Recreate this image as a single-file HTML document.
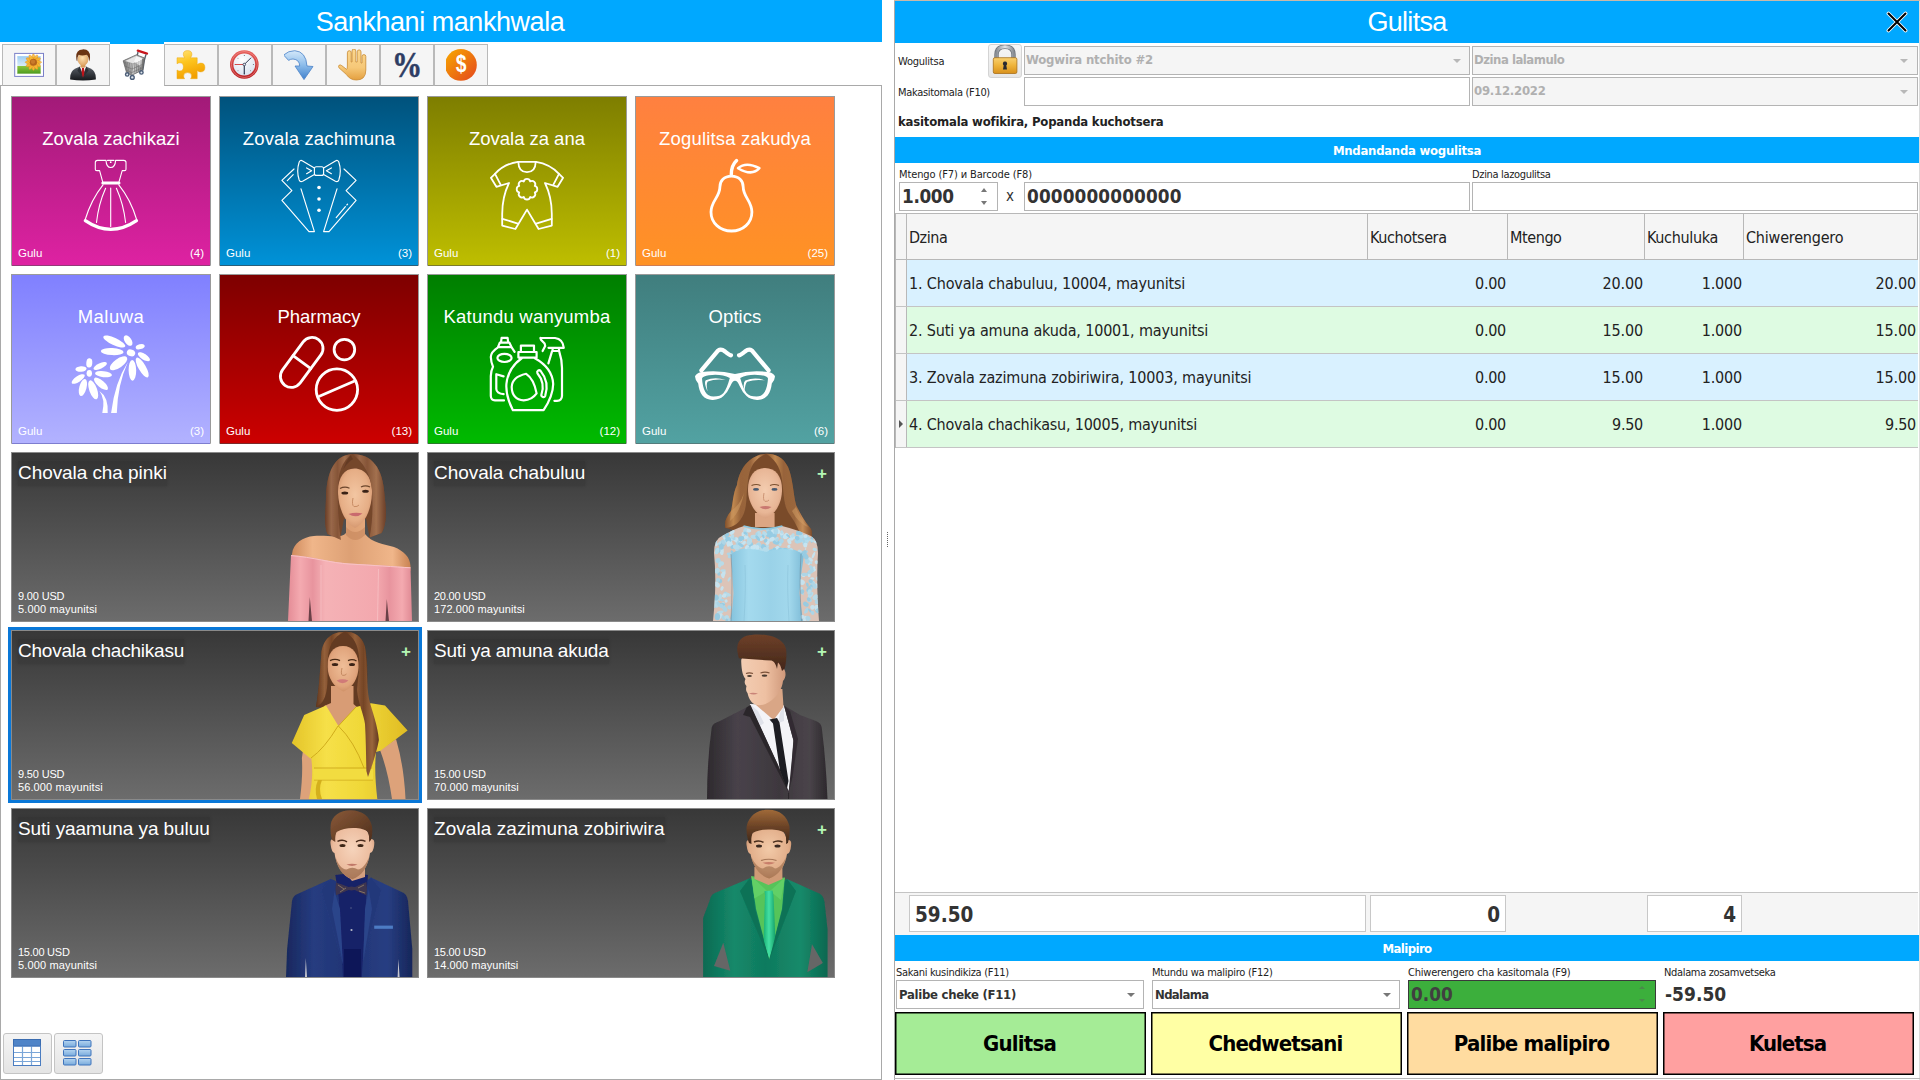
<!DOCTYPE html>
<html lang="ny"><head><meta charset="utf-8"><title>Gulitsa</title>
<style>
*{box-sizing:border-box;margin:0;padding:0}
html,body{width:1920px;height:1080px;overflow:hidden;background:#fff}
body{position:relative;font-family:"Liberation Sans",sans-serif;color:#222}
.tah{font-family:"DejaVu Sans Condensed","DejaVu Sans","Liberation Sans",sans-serif}
#L{position:absolute;left:0;top:0;width:882px;height:1080px;background:#fff}
.hdr{position:absolute;background:#00a8ff;color:#fff;text-align:center;white-space:nowrap}
#lh{left:0;top:0;width:882px;height:42px;font-size:27px;line-height:42px}
#lh>span{position:relative;top:1px;left:-1px}
#pane{position:absolute;left:0;top:85px;width:882px;height:995px;border:1px solid #a9a9a9;background:#fff}
.tab{position:absolute;top:44px;width:54px;height:42px;background:#f5f5f5;border:1px solid #b9b9b9;border-bottom:1px solid #a9a9a9}
.tab.sel{background:#fff;border:none;height:43px;box-shadow:0 -2px 0 #00a8ff}
.tab svg{position:absolute;left:11px;top:4px;width:32px;height:32px}
.tab.sel svg{left:11px;top:4px}
.cat{position:absolute;width:200px;height:170px;border:1px solid #9a9a9a;border-bottom-color:rgba(120,120,120,.35);color:#fff}
.ct{position:absolute;left:0;width:198px;top:31px;text-align:center;font-size:18.5px;line-height:22px;white-space:nowrap}
.ci{position:absolute;left:49px;top:55px;width:100px;height:90px}
.ci svg{position:absolute;left:0;top:0;width:100px;height:90px;overflow:visible}
.cg{position:absolute;left:6px;top:149px;font-size:11.5px;line-height:14px}
.cn{position:absolute;right:6px;top:149px;font-size:11.5px;line-height:14px}
.c1{background:linear-gradient(#a21a78,#de22a2)}
.c2{background:linear-gradient(#00527c,#0092d8)}
.c3{background:linear-gradient(#7e7e00,#bebe00)}
.c4{background:linear-gradient(#ff8040,#ff9224)}
.c5{background:linear-gradient(#8080ff,#b2b2ff)}
.c6{background:linear-gradient(#7e0000,#cc0000)}
.c7{background:linear-gradient(#007e00,#00ba00)}
.c8{background:linear-gradient(#407e7e,#52a2a2)}
.prod{position:absolute;width:408px;height:170px;border:1px solid #8a8a8a;background:linear-gradient(#383838,#6c6c6c);color:#fff;overflow:hidden}
.selbox{position:absolute;width:414px;height:176px;border:3px solid #0a78d8;background:#fff}
.pt{position:absolute;left:6px;top:8px;font-size:19px;line-height:24px;white-space:nowrap}
.pt span.bg{background:rgba(0,0,0,.09);box-shadow:0 0 3px rgba(0,0,0,.14);padding:1px 0 3px}
.pp{position:absolute;left:6px;top:137px;font-size:11px;line-height:13px;white-space:nowrap}
.pq{position:absolute;left:6px;top:150px;font-size:11px;line-height:13px;white-space:nowrap}
.plus{position:absolute;left:802px;left:386px;top:11px;width:16px;text-align:center;font-size:17px;line-height:20px;color:#b4f7b4;font-weight:bold}
.pimg{position:absolute;right:4px;top:0;width:130px;height:168px}
.pimg svg{position:absolute;left:0;top:0;width:130px;height:168px}
.vbtn{position:absolute;top:1033px;width:49px;height:41px;border:1px solid #c4c4c4;border-radius:3px;background:linear-gradient(#f4f4f4,#e4e4e4)}
.vbtn svg{position:absolute;left:8px;top:3px;width:32px;height:32px}
#split{position:absolute;left:887px;top:532px;width:1px;height:15px;background:repeating-linear-gradient(#666 0 1px,transparent 1px 2px)}
/* right */
#R .abs, #R div{position:absolute}
#rh{font-size:27px;line-height:42px}
.lbl{font-size:11px;line-height:13px;white-space:nowrap;color:#222}
.inp{border:1px solid #b4b4b4;background:#fff;height:29px;font-weight:bold;white-space:nowrap;color:#333}
.inp.dis{background:#f5f5f5;color:#b0b0b0}
.bar{background:#00a8ff;color:#fff;text-align:center;font-weight:bold;font-size:13px;width:1024px;left:0}
.arr{width:0;height:0;border-left:4px solid transparent;border-right:4px solid transparent;border-top:4px solid #777}
.arr.lt{border-top-color:#b8b8b8}
#R{position:absolute;left:0;top:0;width:0;height:0}
#R .rb{position:absolute}
.th{background:#f5f5f5;border-right:1px solid #b8b8b8;border-bottom:1px solid #b8b8b8;font-size:16px;color:#222;white-space:nowrap}
.th>span{position:absolute;left:2px;top:14px;line-height:20px}

.tr{border-bottom:1px solid #c4c4c4}
.td{font-size:16px;line-height:20px;padding-top:14px;height:46px;white-space:nowrap;color:#222}
.td.r{text-align:right}
.bbtn{width:251px;height:63px;border:1px solid #000;box-shadow:inset 0 0 0 0.5px #000;text-align:center;font-weight:bold;font-size:22px;line-height:61px;padding-right:2px;color:#000;white-space:nowrap}
.lockb{border:1px solid #d4d4d4;border-radius:3px;background:linear-gradient(#f6f6f6,#e6e6e6)}
.lockb svg{position:absolute;left:2px;top:0px;width:28px;height:30px}

</style></head>
<body>
<div id="L">
<div class="hdr" id="lh"><span><span style="letter-spacing:-0.454px">Sankhani mankhwala</span></span></div>
<div id="pane"></div>
<div class="tab" style="left:2px"><svg viewBox="0 0 32 32"><defs><linearGradient id="psky" x1="0" y1="0" x2="0" y2="1"><stop offset="0" stop-color="#9ccdf2"/><stop offset=".55" stop-color="#d8ecf8"/><stop offset=".56" stop-color="#8cc63f"/><stop offset="1" stop-color="#4c9a1e"/></linearGradient></defs><rect x=".7" y="4.4" width="28.8" height="23" fill="#fff" stroke="#7a80c8" stroke-width="1"/><rect x="3.2" y="7" width="23.6" height="17.8" fill="url(#psky)"/><g transform="translate(19.4 13.2) scale(1.08)"><g fill="#f7b733" stroke="#e08a1c" stroke-width=".4"><ellipse rx="2" ry="7.6"/><ellipse rx="2" ry="7.6" transform="rotate(30)"/><ellipse rx="2" ry="7.6" transform="rotate(60)"/><ellipse rx="2" ry="7.6" transform="rotate(90)"/><ellipse rx="2" ry="7.6" transform="rotate(120)"/><ellipse rx="2" ry="7.6" transform="rotate(150)"/></g><circle r="3.3" fill="#b5651d"/><circle r="2" cx="-.4" cy="-.4" fill="#c97a2a"/></g><rect x="3.2" y="7" width="23.6" height="17.8" fill="none" stroke="#fff" stroke-opacity=".25"/></svg>
</div>
<div class="tab" style="left:56px"><svg viewBox="0 0 32 32"><defs><linearGradient id="usuit" x1="0" y1="0" x2="0" y2="1"><stop offset="0" stop-color="#5a6068"/><stop offset="1" stop-color="#16181c"/></linearGradient><radialGradient id="uface" cx=".45" cy=".4" r=".7"><stop offset="0" stop-color="#ffe0b0"/><stop offset="1" stop-color="#d89a58"/></radialGradient></defs><path d="M2.2 30.6 Q1.6 22.5 7.5 19.6 L12 17.4 H18 L22.5 19.6 Q28.400 22.5 27.800 30.600 Q15 32.400 2.2 30.600Z" fill="url(#usuit)"/><path d="M11.600 17.600 L15 25.500 L18.400 17.600Z" fill="#fff"/><path d="M14 18.800 H16 L16.800 26 L15 28.500 L13.200 26Z" fill="#c0151b"/><path d="M11.800 17.400 L9.400 21.400 L14.800 28.600Z M18.200 17.400 L20.600 21.400 L15.200 28.600Z" fill="#2c3036"/><rect x="12.600" y="13" width="4.800" height="5.600" fill="#d89a58"/><ellipse cx="15" cy="10.200" rx="5.300" ry="6.300" fill="url(#uface)"/><path d="M8.600 11.500 Q6.600 .8 14.500 .4 Q22.500 -.2 22 9 Q21.800 11.500 21 12.500 Q21 7.500 18.500 5.800 Q14 7 10.800 5.800 Q9 8 9.400 12.600Z" fill="#6b3412"/></svg>
</div>
<div class="tab sel" style="left:110px"><svg viewBox="0 0 32 32"><defs><linearGradient id="cgr" x1="0" y1="0" x2="1" y2="0"><stop offset="0" stop-color="#6e6e6e"/><stop offset=".45" stop-color="#d8d8d8"/><stop offset=".6" stop-color="#b8b8b8"/><stop offset="1" stop-color="#767676"/></linearGradient></defs><g transform="translate(0 1)"><path d="M16.800 1.600 L26 4.600" stroke="#c8161d" stroke-width="2.300" stroke-linecap="round"/><path d="M17 3 L15.800 8.500 M25 5.400 L23.400 11 L21.800 21.500" stroke="#5c6470" stroke-width="1.400" fill="none"/><path d="M2.200 11.800 L15.400 5.800 L23.600 9 L21.400 21.200 L10.400 26.400 L5.400 23 Z" fill="url(#cgr)" stroke="#5e5e5e" stroke-width=".7"/><path d="M15.400 6.400 L22.800 9.200 L12 14.800 L3.200 12Z" fill="#e6e6e6" stroke="#7a7a7a" stroke-width=".5"/><path d="M15.300 7.400 L21 9.600 L20 18 L13 12.500Z" fill="#f6f6f6"/><path d="M12 15 L10.600 26" stroke="#777" stroke-width=".7"/><g stroke="#6a6a6a" stroke-width=".55" fill="none"><path d="M4.500 12.800 L6.600 23.400 M6.500 13.400 L8 24.400 M8.500 14 L9.400 25.400 M10.300 14.500 L10 26 M14 14 L13 24.800 M16 13 L15.200 23.800 M18 12 L17.400 22.800 M20 11 L19.400 21.800 M22 10 L21 21 M3.800 17 L11 20 L22.400 15 M4.800 21 L10.700 23.600 L21.800 18.600"/></g><g fill="#dfe6ee" stroke="#4a5c76" stroke-width="1.400"><circle cx="6.200" cy="25.400" r="1.700"/><circle cx="11.300" cy="28.400" r="1.900"/><circle cx="20.400" cy="23.400" r="1.700"/></g></g></svg>
</div>
<div class="tab" style="left:164px"><svg viewBox="0 0 32 32"><defs><linearGradient id="pzg" x1="0" y1="0" x2=".3" y2="1"><stop offset="0" stop-color="#ffe27a"/><stop offset=".45" stop-color="#fdc51f"/><stop offset="1" stop-color="#f3a000"/></linearGradient></defs><path d="M1 8.800 H8.700 Q7.300 7 7.300 5.300 Q7.300 1.600 11.600 1.600 Q15.900 1.600 15.900 5.300 Q15.900 7 14.500 8.800 H21.200 V15.600 Q23 14.100 24.800 14.100 Q28.900 14.100 28.900 18.500 Q28.900 22.900 24.800 22.900 Q23 22.900 21.200 21.400 V29.700 H14.600 Q15.600 28.400 15.600 27 Q15.600 23.600 11.600 23.600 Q7.600 23.600 7.600 27 Q7.600 28.400 8.600 29.700 H1 V21 Q2.400 22 3.800 22 Q7.400 22 7.400 17.800 Q7.400 13.800 3.800 13.800 Q2.400 13.800 1 14.800Z" fill="url(#pzg)" stroke="#eda915" stroke-width=".5"/></svg>
</div>
<div class="tab" style="left:218px"><svg viewBox="0 0 32 32"><defs><radialGradient id="ckf" cx=".4" cy=".3" r=".8"><stop offset="0" stop-color="#ffffff"/><stop offset="1" stop-color="#d5e0ee"/></radialGradient><linearGradient id="ckr" x1="0" y1="0" x2="0" y2="1"><stop offset="0" stop-color="#e8605c"/><stop offset="1" stop-color="#b81e22"/></linearGradient></defs><circle cx="14.300" cy="15.500" r="14.300" fill="url(#ckr)"/><circle cx="14.300" cy="15.500" r="13" fill="none" stroke="#f4a8a4" stroke-width=".8" opacity=".6"/><circle cx="14.300" cy="15.500" r="10.900" fill="url(#ckf)"/><g fill="#555"><circle cx="14.300" cy="6.400" r=".5"/><circle cx="14.300" cy="24.600" r=".5"/><circle cx="5.200" cy="15.500" r=".5"/><circle cx="23.400" cy="15.500" r=".5"/><circle cx="8" cy="9.200" r=".45"/><circle cx="20.600" cy="21.800" r=".45"/><circle cx="8" cy="21.800" r=".45"/></g><path d="M14.300 15.500 L20.800 9" stroke="#333d55" stroke-width="1" stroke-linecap="round"/><path d="M14.300 15.500 V25" stroke="#333d55" stroke-width="1.200" stroke-linecap="round"/><path d="M14.300 15.500 H5.300" stroke="#d03a3a" stroke-width=".9" stroke-linecap="round"/><circle cx="14.300" cy="15.500" r="1.300" fill="#e8eef8" stroke="#333d55" stroke-width=".8"/></svg>
</div>
<div class="tab" style="left:272px"><svg viewBox="0 0 32 32"><defs><linearGradient id="arg" x1="0" y1="0" x2="0" y2="1"><stop offset="0" stop-color="#d4e8fa"/><stop offset=".5" stop-color="#8cbcea"/><stop offset="1" stop-color="#3f80cc"/></linearGradient></defs><path d="M-.400 6 Q4.500 1.600 10.800 1.700 Q22 2.500 23 17 L29 17.500 L20 30.600 L11 17 L15.700 17 Q15.500 10.500 9 10 Q6.500 10 4.600 11.400Z" fill="url(#arg)" stroke="#4a82c8" stroke-width=".8" stroke-linejoin="round"/></svg>
</div>
<div class="tab" style="left:326px"><svg viewBox="0 0 32 32"><defs><linearGradient id="hdg" x1="0" y1="0" x2="0" y2="1"><stop offset="0" stop-color="#fbd891"/><stop offset=".6" stop-color="#f6c878"/><stop offset="1" stop-color="#e4a040"/></linearGradient></defs><path d="M9.400 17 V3.800 Q9.400 1.700 11.300 1.700 Q13.200 1.700 13.200 3.800 V13 H14 V2 Q14 0 15.900 0 Q17.800 0 17.800 2 V13 H19.200 V2.900 Q19.200 .9 21.100 .9 Q23 .9 23 2.900 V14 H24 V7.400 Q24 5.600 25.900 5.600 Q27.800 5.600 27.800 7.400 V21 Q27.800 31 18.500 31 Q12 31 8.400 25.500 L1 18.800 Q-.300 17.300 1 16.300 Q2.300 15.400 3.700 16.600 L8.600 20.400 Q9.400 20 9.400 17Z" fill="url(#hdg)" stroke="#c98a32" stroke-width=".8" stroke-linejoin="round"/></svg>
</div>
<div class="tab" style="left:380px"><svg viewBox="0 0 32 32"><text transform="translate(15 27.900) scale(.84 1)" text-anchor="middle" style="font-family:'Liberation Serif',serif;font-weight:bold;font-size:36px" fill="#2e3d64" stroke="#2e3d64" stroke-width=".5">%</text></svg>
</div>
<div class="tab" style="left:434px"><svg viewBox="0 0 32 32"><defs><linearGradient id="dlg" x1="0" y1="0" x2="1" y2="1"><stop offset="0" stop-color="#f8aa00"/><stop offset="1" stop-color="#e4461e"/></linearGradient></defs><circle cx="14.900" cy="15.900" r="15.900" fill="url(#dlg)"/><text transform="translate(15 23.300) scale(.8 1)" text-anchor="middle" style="font-family:'Liberation Sans',sans-serif;font-weight:bold;font-size:24px" fill="#fff">$</text></svg>
</div>
<div class="cat c1" style="left:11px;top:96px"><div class="ct"><span style="letter-spacing:0.046px">Zovala zachikazi</span></div><div class="ci"><svg viewBox="0 0 100 90" fill="none" stroke="#fff" stroke-width="1.1" stroke-linecap="round" stroke-linejoin="round"><path d="M45 8.4 H36.5 Q34.3 8.4 34.3 10.6 V17.2 Q34.3 18.6 35.8 18.6 H38.6 L41.7 29.8 M54.6 8.4 H62.8 Q65 8.4 65 10.6 V17.2 Q65 18.6 63.5 18.6 H61.2 L58 29.8 M45 8.4 Q45.4 15.5 49.7 15.5 Q54.2 15.5 54.6 8.4 M46.5 8.4 H53"/><path d="M41.8 31.1 H58" stroke-width="3"/><path d="M42 32.8 Q30 48 24.2 67.5 M57.8 32.8 Q70 48 75.6 67.5 M49.7 36 V74.5 M44.6 36.2 Q37.5 52 35.5 70.5 M55.4 36.2 Q62.5 52 64.6 70.5"/><path d="M24.3 68.6 Q49.8 86 75.5 68.6" stroke-width="3.2"/><circle cx="49.7" cy="10.2" r="0.9" fill="#fff" stroke="none"/></svg>
</div><div class="cg">Gulu</div><div class="cn">(4)</div></div>
<div class="cat c2" style="left:219px;top:96px"><div class="ct"><span style="letter-spacing:0.135px">Zovala zachimuna</span></div><div class="ci"><svg viewBox="0 0 100 90" fill="none" stroke="#fff" stroke-width="1.15" stroke-linecap="round" stroke-linejoin="round"><rect x="45.4" y="14.7" width="9.2" height="8.7" rx="2"/><path d="M45.4 16 L33.6 8.9 Q31.2 7.6 30.2 10 Q27.2 19 30.2 28 Q31.2 30.4 33.6 29.2 L45.4 22.4 M54.6 16 L66.4 8.9 Q68.8 7.6 69.8 10 Q72.8 19 69.8 28 Q68.8 30.4 66.4 29.2 L54.6 22.4"/><path d="M37.6 15.9 L42.6 18.8 L37.6 21.7 M62.4 15.9 L57.4 18.8 L62.4 21.7"/><path d="M25 17 L12.9 28.3 L22.9 38.7 L12.9 48.3 L40 79.6 H45.4 L32 36.8 M75 17 L87.1 28.3 L77.1 38.7 L87.1 48.3 L60 79.6 H54.6 L68 36.8"/><path d="M24.2 22.6 L18.3 28.7 M76.4 54.6 L67.2 65.6 M78.6 52.2 L77.8 53"/><g fill="#fff" stroke="none"><circle cx="50" cy="35.5" r="1.8"/><circle cx="50" cy="47" r="1.8"/><circle cx="50" cy="58.3" r="1.8"/></g></svg>
</div><div class="cg">Gulu</div><div class="cn">(3)</div></div>
<div class="cat c3" style="left:427px;top:96px"><div class="ct"><span style="letter-spacing:-0.032px">Zovala za ana</span></div><div class="ci"><svg viewBox="0 0 100 90" fill="none" stroke="#fff" stroke-width="1.8" stroke-linecap="round" stroke-linejoin="round"><path d="M41 9.8 H59 M41.3 10 Q41.6 20.2 50 20.2 Q58.4 20.2 58.7 10"/><path d="M41 9.8 Q27 12 18 21.8 L13.9 25.8 L19.4 34.8 L32 31 Q25.2 45 25.2 62 V73.6 L38.4 77 L50 57.6 L61.6 77 L74.8 73.6 V62 Q74.8 45 68 31 L80.6 34.8 L86.1 25.8 L82 21.8 Q73 12 59 9.8"/><path d="M18 21.8 L23.6 32.6 M82 21.8 L76.4 32.6 M25.4 66.8 L40.8 71.6 M74.6 66.8 L59.2 71.6"/><path d="M46.79 29.44 A3.3 3.3 0 0 1 53.21 29.44 A3.3 3.3 0 0 1 57.76 33.99 A3.3 3.3 0 0 1 57.76 40.41 A3.3 3.3 0 0 1 53.21 44.96 A3.3 3.3 0 0 1 46.79 44.96 A3.3 3.3 0 0 1 42.24 40.41 A3.3 3.3 0 0 1 42.24 33.99 A3.3 3.3 0 0 1 46.79 29.44Z"/></svg></div><div class="cg">Gulu</div><div class="cn">(1)</div></div>
<div class="cat c4" style="left:635px;top:96px"><div class="ct"><span style="letter-spacing:0.157px">Zogulitsa zakudya</span></div><div class="ci"><svg viewBox="0 0 100 90" fill="none" stroke="#fff" stroke-width="2.8" stroke-linecap="round" stroke-linejoin="round"><path d="M46.4 24.2 C39 24.2 34.9 29 34.9 35 C34.9 45 26 49 26 60 C26 71 35 79 46.5 79 C58 79 66.9 71 66.9 60 C66.9 49 58.2 45 58.2 35 C58.2 29 54 24.2 46.4 24.2 Z"/><path d="M51.6 8.6 Q46.3 13.5 46.3 22.6" stroke-width="3.4"/><path d="M53 16.2 Q61 9.2 74.4 16.2 Q67 24.6 53 16.2 Z" stroke-width="2.5"/></svg>
</div><div class="cg">Gulu</div><div class="cn">(25)</div></div>
<div class="cat c5" style="left:11px;top:274px"><div class="ct"><span style="letter-spacing:0.492px">Maluwa</span></div><div class="ci"><svg viewBox="0 0 100 90" fill="#fff" stroke="none"><ellipse cx="53.3" cy="11.5" rx="12" ry="3.7" transform="rotate(25 53.3 11.5)"/><ellipse cx="67.1" cy="10.6" rx="5.9" ry="3.4" transform="rotate(55 67.1 10.6)"/><ellipse cx="79.2" cy="16.7" rx="4.6" ry="2.5" transform="rotate(-15 79.2 16.7)"/><ellipse cx="82.9" cy="26.7" rx="7" ry="2.9" transform="rotate(33 82.9 26.7)"/><ellipse cx="81.2" cy="37.5" rx="11.3" ry="3.7" transform="rotate(60 81.2 37.5)"/><ellipse cx="71.4" cy="40.3" rx="10.4" ry="3.8" transform="rotate(89 71.4 40.3)"/><ellipse cx="57.5" cy="33.3" rx="10.3" ry="4.4" transform="rotate(-35 57.5 33.3)"/><ellipse cx="51.2" cy="21.6" rx="11.4" ry="3.5" transform="rotate(3 51.2 21.6)"/><ellipse cx="70" cy="22.9" rx="4.3" ry="3.4" transform="rotate(20 70 22.9)"/><ellipse cx="28.3" cy="32.9" rx="4.6" ry="3" transform="rotate(95 28.3 32.9)"/><ellipse cx="39.2" cy="36" rx="7.3" ry="2.7" transform="rotate(-25 39.2 36)"/><ellipse cx="42.5" cy="44.2" rx="8.5" ry="3" transform="rotate(7 42.5 44.2)"/><ellipse cx="40" cy="53.8" rx="8.7" ry="3.4" transform="rotate(40 40 53.8)"/><ellipse cx="32.2" cy="59.8" rx="10" ry="3.9" transform="rotate(70 32.2 59.8)"/><ellipse cx="21.9" cy="57.5" rx="8.8" ry="3.6" transform="rotate(-75 21.9 57.5)"/><ellipse cx="17.2" cy="49" rx="7.6" ry="2.9" transform="rotate(-33 17.2 49)"/><ellipse cx="20" cy="39" rx="5.6" ry="2.8" transform="rotate(-5 20 39)"/><ellipse cx="28.3" cy="43.3" rx="3.4" ry="2.7" transform="rotate(90 28.3 43.3)"/><path d="M66.9 32 Q54 52 50.1 83 H55.8 Q56.5 55 66.9 32Z"/><path d="M38.4 61 Q44.5 69 41.3 83 H46.7 Q47.5 67 38.4 61Z"/></svg></div><div class="cg">Gulu</div><div class="cn">(3)</div></div>
<div class="cat c6" style="left:219px;top:274px"><div class="ct"><span style="letter-spacing:-0.035px">Pharmacy</span></div><div class="ci"><svg viewBox="0 0 100 90" fill="none" stroke="#fff" stroke-width="2.8" stroke-linecap="round"><circle cx="75.4" cy="19.6" r="10.3"/><circle cx="67.9" cy="59.6" r="20.7"/><path d="M50.4 66.2 L86.2 50.8"/><g transform="rotate(36.4 32.7 32.4)"><rect x="21.7" y="4" width="22" height="56.8" rx="11"/><path d="M21.7 32 H43.7"/></g></svg>
</div><div class="cg">Gulu</div><div class="cn">(13)</div></div>
<div class="cat c7" style="left:427px;top:274px"><div class="ct"><span style="letter-spacing:0.217px">Katundu wanyumba</span></div><div class="ci"><svg viewBox="0 0 100 90" fill="none" stroke="#fff" stroke-width="2.2" stroke-linecap="round" stroke-linejoin="round"><path d="M43.9 21.6 V15.6 H57 V21.6 M41.4 22 H59.6 V27.6 H41.4 Z M45 28 Q31 38 29.4 54 Q28.6 66 35.9 80.2 H66.6 Q76 66 76.2 54 Q75.5 38 57.5 28"/><path d="M49.2 43.8 Q35 47 34.7 57 Q35 69.5 46.7 70.4 Q55 70 59.6 63.4 Q57 49 49.2 43.8Z"/><path d="M60.4 43.2 Q68.5 53 64.4 64.6 A2 2 0 0 0 68.2 65.8 Q72.6 52 63.6 40.9 A2 2 0 0 0 60.4 43.2 Z"/><path d="M24 12.4 L24.6 7.8 H30.6 L31.2 12.4 M22.8 12.6 H32.4 L34.6 17.2 H21 Z M21 17.4 Q14 22 13.8 27 Q14 32 16 36.7 Q13.8 41 13.8 46 V66 Q14 70.2 18 70.4 H27 M34.8 17.6 L37.6 21.8"/><ellipse cx="27.5" cy="27.9" rx="7.1" ry="4.1"/><path d="M26.6 46.4 L19.3 44.2 V59 Q19.6 63.6 26.6 64.2"/><path d="M63.4 8 H78 Q86 9 86.8 17.8 H71.5 M63.4 8 L64.2 10 L67.6 13.6 L68.2 16 L65.6 21 M75.6 18 V20.8 M82 18 V20.8 M75.2 21 H82 M75 21.4 L71.4 33.4 M82.2 21.4 Q85 30 85 38 V66 Q84.8 70.6 80 70.8 H77.4"/></svg>
</div><div class="cg">Gulu</div><div class="cn">(12)</div></div>
<div class="cat c8" style="left:635px;top:274px"><div class="ct"><span style="letter-spacing:0.060px">Optics</span></div><div class="ci"><svg viewBox="0 0 100 90" fill="#fff" stroke="none"><path fill-rule="evenodd" d="M10 46.6 Q10.5 43.5 16.5 42 Q34 39.8 50 44 Q66 39.8 83.5 42 Q89.5 43.5 90 46.6 Q89.8 50.5 86.8 53.4 Q86 61 82.6 65.6 Q78.5 70.2 72 69.9 Q65.5 69.8 61.5 66 Q57.5 62.5 54.6 56 Q52.5 50.8 50 50.8 Q47.5 50.8 45.4 56 Q42.5 62.5 38.5 66 Q34.500 69.800 28 69.900 Q21.5 70.200 17.4 65.600 Q14 61 13.2 53.4 Q10.2 50.5 10 46.600 Z M17 48.4 Q17.5 56.5 20.2 61.8 Q23 66.600 28.5 66.600 Q35.500 66.600 38.5 63 Q42 58.500 44.800 48 Q36 43.5 24 45.2 Q18 46 17 48.400 Z M83 48.400 Q82.500 56.5 79.800 61.800 Q77 66.600 71.500 66.600 Q64.500 66.600 61.500 63 Q58 58.500 55.200 48 Q64 43.5 76 45.2 Q82 46 83 48.400 Z"/><path d="M22.6 61.5 Q18.6 52.5 20.8 50.2 Q30 46.6 40.8 50 Q30 48.800 22.8 51.4 Q20.8 53.500 22.600 61.500Z M59.400 61.500 Q57.6 52.500 60.4 50.500 Q70 46.800 80.200 50.4 Q70 49 62.200 51.800 Q60.2 53.500 59.400 61.500Z"/><path d="M16.400 40.400 L33.200 20.400 Q36.200 18.400 40 21.500 Q44 25 46 25.300 M83.600 40.400 L66.800 20.400 Q63.800 18.400 60 21.500 Q56 25 54 25.300" fill="none" stroke="#fff" stroke-width="4.200" stroke-linecap="round" stroke-linejoin="round"/></svg>
</div><div class="cg">Gulu</div><div class="cn">(6)</div></div>
<div class="prod" style="left:11px;top:452px"><div class="pimg"><svg viewBox="0 0 130 168"><defs><filter id="sf1" x="-5%" y="-5%" width="110%" height="110%"><feGaussianBlur stdDeviation=".7"/></filter><linearGradient id="p1h" x1="0" y1="0" x2="1" y2="0"><stop offset="0" stop-color="#6a3e26"/><stop offset=".22" stop-color="#99684a"/><stop offset=".45" stop-color="#865538"/><stop offset=".72" stop-color="#a3714f"/><stop offset="1" stop-color="#6c4029"/></linearGradient><linearGradient id="p1d" x1="0" y1="0" x2="1" y2="0"><stop offset="0" stop-color="#e48c96"/><stop offset=".1" stop-color="#f4aab0"/><stop offset=".2" stop-color="#e8949e"/><stop offset=".3" stop-color="#f5b2b6"/><stop offset=".72" stop-color="#f3a8ae"/><stop offset=".82" stop-color="#e8949e"/><stop offset=".92" stop-color="#f4aab0"/><stop offset="1" stop-color="#e08a94"/></linearGradient><radialGradient id="p1s" cx=".5" cy=".45" r=".6"><stop offset="0" stop-color="#f3c6a2"/><stop offset=".7" stop-color="#e6ae86"/><stop offset="1" stop-color="#cf9068"/></radialGradient><linearGradient id="p1sh" x1="0" y1="0" x2="1" y2="0"><stop offset="0" stop-color="#cf8a5c"/><stop offset=".18" stop-color="#f0b68a"/><stop offset=".5" stop-color="#dda074"/><stop offset=".85" stop-color="#f0b68a"/><stop offset="1" stop-color="#c98252"/></linearGradient></defs><g filter="url(#sf1)"><path d="M68 1 C50 2 42.500 20 42 45 C41.500 62 40 74 43.500 81 L56 87 L60 66 L82 66 L85.500 84.500 L97.500 80 C104 70 101.500 52 100.500 42 C99 15 88 1 68 1Z" fill="#74462c"/><path d="M8 101 C9 90 19 84 30 83 C45 82 57 86 62 80 V66 H81 V81 C88 90 100 91 110 94 C120 98 126 104 126.500 113 V118 L7 106Z" fill="url(#p1sh)"/><path d="M62 74 Q71 84 81 74 V82 Q71 92 62 82Z" fill="#c98a60" opacity=".7"/><path d="M54 40 C53.500 25 60 15.500 70.500 15.500 C81 15.500 88.500 25 88 40 C87.500 55 82 70 71 75 C61 70 54.500 55 54 40Z" fill="url(#p1s)"/><path d="M68.500 1 C57 8 54 22 54 36 C53.300 52 54.500 72 57 87 L43.500 81 C40 72 41.600 58 42 45 C42.500 20 50 2 68.500 1Z" fill="url(#p1h)"/><path d="M68 1 C80 9 86.500 22 88 37 C89 56 88.500 70 85.500 84.500 L97.500 80 C104 69 101.500 52 100.500 42 C99 15 88 1 68 1Z" fill="url(#p1h)"/><path d="M66.500 2 Q62 8 59.500 16 Q64 9 69 6Z" fill="#5a341f" opacity=".6"/><g fill="#3a2418"><ellipse cx="60.800" cy="39.900" rx="3.400" ry="1.500"/><ellipse cx="81.500" cy="38.300" rx="3.300" ry="1.500"/></g><path d="M56 35.600 Q60.500 33 65.500 35.200 M77 34 Q81.500 31.600 86 34" stroke="#6b452c" stroke-width="1.200" fill="none"/><path d="M64.500 61 Q71.500 58.600 78.500 60.500 Q72 65.800 64.500 61Z" fill="#c96a6e"/><path d="M69 45 Q67.500 52 70 53.600 Q73.500 54 75 52" stroke="#c88c64" stroke-width="1" fill="none"/><path d="M7 102 C28 103.500 48 109.600 65 110.400 C90 111.800 110 113.200 126.500 114.200 L128 168 H4 Z" fill="url(#p1d)"/><path d="M7 102.600 C28 104 48 110.200 65 111 C90 112.400 110 113.800 126.500 114.800" stroke="#f8c4c6" stroke-width="1" fill="none"/><path d="M24.500 168 L25.800 144 L28 168Z M101.500 168 L102.800 146 L105 168Z" fill="#6a4046"/><path d="M37 112 V168 M94.500 116 L93.500 168" stroke="#f9c8ca" stroke-width=".8" opacity=".8"/></g></svg>
</div><div class="pt"><span class="bg"><span style="letter-spacing:-0.070px">Chovala cha pinki</span></span></div><div class="pp"><span style="letter-spacing:-0.163px">9.00 USD</span></div><div class="pq"><span style="letter-spacing:0.144px">5.000 mayunitsi</span></div></div>
<div class="prod" style="left:427px;top:452px"><div class="pimg"><svg viewBox="0 0 130 168"><defs><filter id="sf2" x="-5%" y="-5%" width="110%" height="110%"><feGaussianBlur stdDeviation=".7"/></filter><linearGradient id="p2h" x1="0" y1="0" x2="1" y2="0"><stop offset="0" stop-color="#84522c"/><stop offset=".2" stop-color="#c08850"/><stop offset=".38" stop-color="#98643a"/><stop offset=".62" stop-color="#9a663c"/><stop offset=".8" stop-color="#c48c58"/><stop offset="1" stop-color="#7e4e2e"/></linearGradient><linearGradient id="p2d" x1="0" y1="0" x2="1" y2="0"><stop offset="0" stop-color="#84c2dc"/><stop offset=".25" stop-color="#a4daee"/><stop offset=".55" stop-color="#9ad2e8"/><stop offset=".8" stop-color="#a2d8ec"/><stop offset="1" stop-color="#7cbad6"/></linearGradient><radialGradient id="p2s" cx=".5" cy=".45" r=".62"><stop offset="0" stop-color="#f4cdb0"/><stop offset=".7" stop-color="#e8b696"/><stop offset="1" stop-color="#cf9472"/></radialGradient><clipPath id="p2cl"><path d="M14 100 Q14 86 22 83 L31 88 Q33 120 31 168 H13 Q17 130 14 100Z"/></clipPath><clipPath id="p2cr"><path d="M101 88 L111 83 Q118 87 118 100 Q116 130 119 168 H101 Q99 120 101 88Z"/></clipPath><clipPath id="p2cy"><path d="M22 83 Q34 76 44 73 Q64 78 82 73 Q98 77 111 83 L104 101 Q84 92 66 99 Q46 92 31 101Z"/></clipPath></defs><g filter="url(#sf2)"><path d="M66 .8 C48 2 39 18 37 32 C33 40 33 50 31 58 C26 64 24 70 25.500 75 L44 80 L86 80 L105 91 C112 88 113 81 111 76 C104 68 100 60 96 52 C93 40 93 26 88 14 C83 4 75 .5 66 .8Z" fill="#7a4c2c"/><path d="M55 60 H74.600 V74 H55Z" fill="#dca684"/><path d="M48 38 C47.500 24 54 15 65 15 C76 15 82.500 24 82 38 C81.500 50 76 61 65.500 65.500 C55 61 48.500 50 48 38Z" fill="url(#p2s)"/><path d="M66 .8 C50 8 49 20 47.500 32 C46 44 47 52 44 60 C40 70 34 74 25.500 75 C24 70 26 64 31 58 C33 50 33 40 37 32 C39 18 48 2 66 .8Z" fill="url(#p2h)"/><path d="M66 .8 C78 8 81 18 82.500 30 C84 44 84 54 90 62 C96 70 100 80 105 91 C112 88 113 81 111 76 C104 68 100 60 96 52 C93 40 93 26 88 14 C83 4 75 .5 66 .8Z" fill="url(#p2h)"/><path d="M31 58 Q40 52 44 40 Q40 60 30 68Z M96 54 Q100 66 108 74 Q98 70 92 58Z" fill="#d09a62" opacity=".55"/><g fill="#4a5a70"><ellipse cx="56" cy="36.400" rx="3" ry="1.400"/><ellipse cx="74.500" cy="36.400" rx="3" ry="1.400"/></g><path d="M51.500 32.600 Q56 30.400 60.500 32.400 M70 32.400 Q74.500 30.400 79 32.600" stroke="#7a5030" stroke-width="1.100" fill="none"/><path d="M59.500 54 Q65.500 51.800 71.500 54 Q65.500 58.400 59.500 54Z" fill="#c97870"/><path d="M64 40 Q62.600 47 65 48.400 Q68 48.600 69 47" stroke="#cc9474" stroke-width="1" fill="none"/><path d="M22 83 Q34 76 44 73 Q64 78 82 73 Q98 77 111 83 Q118 87 118 100 Q116 130 119 168 H13 Q17 130 14 100 Q14 86 22 83Z" fill="#dcc4b8"/><path d="M31 101 Q46 90 66 98 Q84 90 104 101 Q101 120 99.500 140 Q101 155 103 168 H30 Q33 155 33.500 140 Q32 120 31 101Z" fill="url(#p2d)"/><g clip-path="url(#p2cl)" opacity=".9"><ellipse cx="21.8" cy="98.6" rx="3.4" ry="1.9" transform="rotate(91 21.8 98.6)" fill="#c4e6f4"/><ellipse cx="17.8" cy="97.3" rx="2.9" ry="2.4" transform="rotate(17 17.8 97.3)" fill="#92cde6"/><ellipse cx="17.1" cy="98.0" rx="3.4" ry="2.1" transform="rotate(107 17.1 98.0)" fill="#b4deee"/><ellipse cx="29.5" cy="101.0" rx="2.8" ry="1.4" transform="rotate(3 29.5 101.0)" fill="#a8d8ec"/><ellipse cx="15.9" cy="88.9" rx="2.1" ry="1.2" transform="rotate(84 15.9 88.9)" fill="#b4deee"/><ellipse cx="23.9" cy="89.1" rx="2.1" ry="1.6" transform="rotate(1 23.9 89.1)" fill="#a8d8ec"/><ellipse cx="21.9" cy="91.2" rx="3.6" ry="2.7" transform="rotate(151 21.9 91.2)" fill="#92cde6"/><ellipse cx="19.7" cy="90.0" rx="2.2" ry="1.2" transform="rotate(138 19.7 90.0)" fill="#b4deee"/><ellipse cx="16.6" cy="91.6" rx="1.7" ry="1.1" transform="rotate(123 16.6 91.6)" fill="#c4e6f4"/><ellipse cx="18.1" cy="107.7" rx="2.5" ry="2.7" transform="rotate(72 18.1 107.7)" fill="#a8d8ec"/><ellipse cx="23.5" cy="89.2" rx="2.9" ry="1.7" transform="rotate(56 23.5 89.2)" fill="#a8d8ec"/><ellipse cx="29.5" cy="103.7" rx="1.8" ry="1.5" transform="rotate(18 29.5 103.7)" fill="#a8d8ec"/><ellipse cx="22.0" cy="96.7" rx="3.0" ry="1.4" transform="rotate(92 22.0 96.7)" fill="#c4e6f4"/><ellipse cx="21.3" cy="94.0" rx="2.4" ry="2.7" transform="rotate(0 21.3 94.0)" fill="#92cde6"/><ellipse cx="30.0" cy="84.5" rx="2.0" ry="2.7" transform="rotate(108 30.0 84.5)" fill="#a8d8ec"/><ellipse cx="15.6" cy="87.8" rx="2.5" ry="1.1" transform="rotate(110 15.6 87.8)" fill="#92cde6"/><ellipse cx="20.2" cy="128.2" rx="2.0" ry="2.1" transform="rotate(3 20.2 128.2)" fill="#92cde6"/><ellipse cx="19.9" cy="144.5" rx="3.5" ry="1.9" transform="rotate(103 19.9 144.5)" fill="#b4deee"/><ellipse cx="16.9" cy="131.6" rx="3.4" ry="2.4" transform="rotate(45 16.9 131.6)" fill="#c4e6f4"/><ellipse cx="16.5" cy="152.0" rx="2.7" ry="2.2" transform="rotate(70 16.5 152.0)" fill="#b4deee"/><ellipse cx="23.7" cy="143.1" rx="1.8" ry="1.2" transform="rotate(173 23.7 143.1)" fill="#c4e6f4"/><ellipse cx="25.8" cy="141.8" rx="2.4" ry="2.5" transform="rotate(88 25.8 141.8)" fill="#c4e6f4"/><ellipse cx="28.9" cy="167.0" rx="1.9" ry="1.9" transform="rotate(118 28.9 167.0)" fill="#a8d8ec"/><ellipse cx="18.5" cy="164.4" rx="2.0" ry="1.1" transform="rotate(48 18.5 164.4)" fill="#b4deee"/><ellipse cx="18.0" cy="127.0" rx="2.2" ry="2.0" transform="rotate(175 18.0 127.0)" fill="#a8d8ec"/><ellipse cx="19.8" cy="163.3" rx="3.6" ry="2.2" transform="rotate(124 19.8 163.3)" fill="#c4e6f4"/><ellipse cx="23.4" cy="164.7" rx="2.5" ry="1.7" transform="rotate(56 23.4 164.7)" fill="#a8d8ec"/><ellipse cx="14.3" cy="152.4" rx="2.6" ry="2.3" transform="rotate(57 14.3 152.4)" fill="#a8d8ec"/><ellipse cx="15.2" cy="148.5" rx="3.1" ry="2.5" transform="rotate(133 15.2 148.5)" fill="#c4e6f4"/><ellipse cx="26.7" cy="164.3" rx="2.3" ry="2.2" transform="rotate(162 26.7 164.3)" fill="#b4deee"/><ellipse cx="29.1" cy="126.3" rx="2.6" ry="1.1" transform="rotate(119 29.1 126.3)" fill="#b4deee"/><ellipse cx="23.3" cy="151.2" rx="1.8" ry="2.1" transform="rotate(179 23.3 151.2)" fill="#b4deee"/><ellipse cx="25.7" cy="141.7" rx="3.1" ry="2.0" transform="rotate(79 25.7 141.7)" fill="#a8d8ec"/><ellipse cx="22.3" cy="147.1" rx="2.2" ry="1.3" transform="rotate(4 22.3 147.1)" fill="#a8d8ec"/><ellipse cx="22.0" cy="151.4" rx="3.4" ry="1.5" transform="rotate(2 22.0 151.4)" fill="#92cde6"/><ellipse cx="16.3" cy="151.3" rx="2.6" ry="2.3" transform="rotate(62 16.3 151.3)" fill="#b4deee"/><ellipse cx="22.0" cy="135.4" rx="2.4" ry="1.5" transform="rotate(114 22.0 135.4)" fill="#c4e6f4"/><ellipse cx="28.1" cy="141.5" rx="2.8" ry="1.6" transform="rotate(25 28.1 141.5)" fill="#b4deee"/><ellipse cx="19.6" cy="163.5" rx="1.7" ry="1.2" transform="rotate(176 19.6 163.5)" fill="#c4e6f4"/><ellipse cx="15.8" cy="145.3" rx="3.5" ry="2.4" transform="rotate(69 15.8 145.3)" fill="#b4deee"/><ellipse cx="24.8" cy="155.8" rx="3.3" ry="2.1" transform="rotate(58 24.8 155.8)" fill="#a8d8ec"/><ellipse cx="18.4" cy="151.1" rx="3.0" ry="1.6" transform="rotate(64 18.4 151.1)" fill="#a8d8ec"/><ellipse cx="24.3" cy="142.4" rx="2.0" ry="2.3" transform="rotate(48 24.3 142.4)" fill="#c4e6f4"/><ellipse cx="26.7" cy="167.3" rx="1.8" ry="1.3" transform="rotate(96 26.7 167.3)" fill="#92cde6"/><ellipse cx="29.3" cy="154.4" rx="2.0" ry="1.9" transform="rotate(32 29.3 154.4)" fill="#a8d8ec"/><ellipse cx="26.1" cy="148.0" rx="1.7" ry="1.5" transform="rotate(140 26.1 148.0)" fill="#c4e6f4"/><ellipse cx="20.3" cy="159.1" rx="3.4" ry="1.3" transform="rotate(168 20.3 159.1)" fill="#b4deee"/><ellipse cx="16.1" cy="144.5" rx="2.9" ry="2.6" transform="rotate(68 16.1 144.5)" fill="#92cde6"/><ellipse cx="21.4" cy="153.0" rx="2.0" ry="2.3" transform="rotate(147 21.4 153.0)" fill="#a8d8ec"/><ellipse cx="17.4" cy="163.7" rx="3.6" ry="2.7" transform="rotate(97 17.4 163.7)" fill="#92cde6"/><ellipse cx="18.9" cy="120.8" rx="1.6" ry="1.9" transform="rotate(7 18.9 120.8)" fill="#92cde6"/><ellipse cx="23.3" cy="121.5" rx="2.6" ry="1.2" transform="rotate(146 23.3 121.5)" fill="#a8d8ec"/><ellipse cx="21.4" cy="110.5" rx="2.7" ry="2.2" transform="rotate(165 21.4 110.5)" fill="#b4deee"/><ellipse cx="17.2" cy="117.7" rx="3.0" ry="2.4" transform="rotate(124 17.2 117.7)" fill="#b4deee"/><ellipse cx="23.7" cy="120.3" rx="3.1" ry="1.8" transform="rotate(101 23.7 120.3)" fill="#c4e6f4"/><ellipse cx="22.8" cy="122.7" rx="2.7" ry="1.6" transform="rotate(69 22.8 122.7)" fill="#c4e6f4"/><ellipse cx="19.6" cy="112.1" rx="2.7" ry="1.6" transform="rotate(90 19.6 112.1)" fill="#b4deee"/><ellipse cx="23.0" cy="117.5" rx="2.8" ry="1.2" transform="rotate(174 23.0 117.5)" fill="#b4deee"/></g><g clip-path="url(#p2cr)" opacity=".9"><ellipse cx="110.7" cy="109.7" rx="1.8" ry="1.3" transform="rotate(30 110.7 109.7)" fill="#b4deee"/><ellipse cx="108.6" cy="108.9" rx="3.4" ry="1.5" transform="rotate(85 108.6 108.9)" fill="#c4e6f4"/><ellipse cx="107.4" cy="107.4" rx="3.5" ry="2.6" transform="rotate(94 107.4 107.4)" fill="#a8d8ec"/><ellipse cx="105.1" cy="100.1" rx="3.5" ry="1.3" transform="rotate(140 105.1 100.1)" fill="#a8d8ec"/><ellipse cx="102.6" cy="88.0" rx="1.6" ry="1.6" transform="rotate(130 102.6 88.0)" fill="#c4e6f4"/><ellipse cx="111.9" cy="86.7" rx="3.1" ry="1.3" transform="rotate(92 111.9 86.7)" fill="#92cde6"/><ellipse cx="113.5" cy="102.2" rx="3.4" ry="1.2" transform="rotate(114 113.5 102.2)" fill="#c4e6f4"/><ellipse cx="110.6" cy="106.5" rx="2.7" ry="1.5" transform="rotate(39 110.6 106.5)" fill="#c4e6f4"/><ellipse cx="105.7" cy="103.3" rx="3.2" ry="2.5" transform="rotate(57 105.7 103.3)" fill="#92cde6"/><ellipse cx="116.3" cy="89.1" rx="3.2" ry="1.4" transform="rotate(17 116.3 89.1)" fill="#c4e6f4"/><ellipse cx="104.1" cy="86.3" rx="2.4" ry="1.8" transform="rotate(169 104.1 86.3)" fill="#c4e6f4"/><ellipse cx="105.2" cy="100.3" rx="3.2" ry="1.3" transform="rotate(103 105.2 100.3)" fill="#92cde6"/><ellipse cx="116.6" cy="109.2" rx="1.8" ry="1.9" transform="rotate(136 116.6 109.2)" fill="#c4e6f4"/><ellipse cx="114.8" cy="96.5" rx="1.6" ry="2.3" transform="rotate(110 114.8 96.5)" fill="#b4deee"/><ellipse cx="104.3" cy="88.8" rx="2.0" ry="2.4" transform="rotate(178 104.3 88.8)" fill="#a8d8ec"/><ellipse cx="111.3" cy="87.5" rx="3.0" ry="1.2" transform="rotate(17 111.3 87.5)" fill="#b4deee"/><ellipse cx="109.4" cy="147.2" rx="2.5" ry="2.1" transform="rotate(2 109.4 147.2)" fill="#a8d8ec"/><ellipse cx="116.2" cy="132.8" rx="2.5" ry="2.3" transform="rotate(73 116.2 132.8)" fill="#c4e6f4"/><ellipse cx="111.9" cy="129.1" rx="3.2" ry="1.6" transform="rotate(15 111.9 129.1)" fill="#b4deee"/><ellipse cx="111.3" cy="133.2" rx="2.8" ry="1.7" transform="rotate(137 111.3 133.2)" fill="#92cde6"/><ellipse cx="117.4" cy="157.0" rx="3.2" ry="2.4" transform="rotate(73 117.4 157.0)" fill="#92cde6"/><ellipse cx="116.8" cy="154.9" rx="3.1" ry="2.3" transform="rotate(73 116.8 154.9)" fill="#c4e6f4"/><ellipse cx="102.3" cy="139.7" rx="2.5" ry="1.1" transform="rotate(64 102.3 139.7)" fill="#a8d8ec"/><ellipse cx="105.2" cy="165.6" rx="2.9" ry="1.7" transform="rotate(119 105.2 165.6)" fill="#c4e6f4"/><ellipse cx="110.6" cy="141.8" rx="3.6" ry="2.1" transform="rotate(126 110.6 141.8)" fill="#b4deee"/><ellipse cx="118.6" cy="126.0" rx="2.8" ry="2.3" transform="rotate(46 118.6 126.0)" fill="#b4deee"/><ellipse cx="110.1" cy="157.7" rx="2.9" ry="1.1" transform="rotate(47 110.1 157.7)" fill="#92cde6"/><ellipse cx="117.3" cy="148.7" rx="2.6" ry="2.6" transform="rotate(102 117.3 148.7)" fill="#a8d8ec"/><ellipse cx="112.5" cy="159.8" rx="1.8" ry="2.1" transform="rotate(137 112.5 159.8)" fill="#a8d8ec"/><ellipse cx="108.0" cy="165.4" rx="2.4" ry="2.7" transform="rotate(154 108.0 165.4)" fill="#a8d8ec"/><ellipse cx="108.7" cy="146.3" rx="2.2" ry="1.7" transform="rotate(56 108.7 146.3)" fill="#92cde6"/><ellipse cx="109.7" cy="136.6" rx="3.5" ry="2.2" transform="rotate(135 109.7 136.6)" fill="#a8d8ec"/><ellipse cx="101.3" cy="135.5" rx="1.7" ry="1.4" transform="rotate(136 101.3 135.5)" fill="#b4deee"/><ellipse cx="102.0" cy="138.6" rx="2.4" ry="2.0" transform="rotate(130 102.0 138.6)" fill="#92cde6"/><ellipse cx="102.3" cy="163.9" rx="2.5" ry="1.9" transform="rotate(175 102.3 163.9)" fill="#c4e6f4"/><ellipse cx="101.8" cy="129.2" rx="3.2" ry="2.6" transform="rotate(26 101.8 129.2)" fill="#c4e6f4"/><ellipse cx="111.9" cy="129.9" rx="2.8" ry="1.8" transform="rotate(37 111.9 129.9)" fill="#a8d8ec"/><ellipse cx="107.4" cy="131.7" rx="2.3" ry="1.3" transform="rotate(75 107.4 131.7)" fill="#92cde6"/><ellipse cx="112.5" cy="154.3" rx="2.3" ry="2.3" transform="rotate(147 112.5 154.3)" fill="#c4e6f4"/><ellipse cx="118.1" cy="156.6" rx="2.1" ry="1.3" transform="rotate(161 118.1 156.6)" fill="#92cde6"/><ellipse cx="105.9" cy="151.2" rx="3.1" ry="2.2" transform="rotate(34 105.9 151.2)" fill="#92cde6"/><ellipse cx="114.6" cy="133.2" rx="2.1" ry="2.7" transform="rotate(165 114.6 133.2)" fill="#a8d8ec"/><ellipse cx="112.3" cy="125.4" rx="2.1" ry="1.2" transform="rotate(7 112.3 125.4)" fill="#c4e6f4"/><ellipse cx="110.7" cy="128.1" rx="1.8" ry="2.2" transform="rotate(99 110.7 128.1)" fill="#92cde6"/><ellipse cx="109.7" cy="140.2" rx="2.3" ry="1.9" transform="rotate(24 109.7 140.2)" fill="#a8d8ec"/><ellipse cx="115.4" cy="144.2" rx="3.2" ry="2.4" transform="rotate(138 115.4 144.2)" fill="#b4deee"/><ellipse cx="108.6" cy="136.1" rx="3.2" ry="1.7" transform="rotate(118 108.6 136.1)" fill="#92cde6"/><ellipse cx="106.2" cy="157.6" rx="3.3" ry="1.4" transform="rotate(118 106.2 157.6)" fill="#a8d8ec"/><ellipse cx="109.3" cy="138.9" rx="2.7" ry="1.8" transform="rotate(102 109.3 138.9)" fill="#b4deee"/><ellipse cx="106.4" cy="158.3" rx="1.8" ry="1.5" transform="rotate(119 106.4 158.3)" fill="#a8d8ec"/><ellipse cx="113.1" cy="117.4" rx="3.1" ry="1.6" transform="rotate(159 113.1 117.4)" fill="#c4e6f4"/><ellipse cx="107.7" cy="120.9" rx="2.3" ry="1.3" transform="rotate(128 107.7 120.9)" fill="#92cde6"/><ellipse cx="109.0" cy="122.0" rx="2.2" ry="1.6" transform="rotate(72 109.0 122.0)" fill="#c4e6f4"/><ellipse cx="103.3" cy="122.4" rx="1.6" ry="2.2" transform="rotate(105 103.3 122.4)" fill="#c4e6f4"/><ellipse cx="113.8" cy="115.5" rx="2.4" ry="1.4" transform="rotate(106 113.8 115.5)" fill="#c4e6f4"/><ellipse cx="104.8" cy="121.4" rx="3.4" ry="1.6" transform="rotate(4 104.8 121.4)" fill="#a8d8ec"/><ellipse cx="110.7" cy="118.5" rx="3.5" ry="2.1" transform="rotate(145 110.7 118.5)" fill="#a8d8ec"/><ellipse cx="111.3" cy="114.6" rx="2.7" ry="1.6" transform="rotate(49 111.3 114.6)" fill="#a8d8ec"/></g><g clip-path="url(#p2cy)" opacity=".95"><ellipse cx="77.8" cy="78.2" rx="3.1" ry="2.1" transform="rotate(44 77.8 78.2)" fill="#c4e6f4"/><ellipse cx="65.0" cy="100.3" rx="2.3" ry="1.8" transform="rotate(63 65.0 100.3)" fill="#92cde6"/><ellipse cx="81.2" cy="88.3" rx="2.7" ry="2.3" transform="rotate(127 81.2 88.3)" fill="#a8d8ec"/><ellipse cx="58.1" cy="98.0" rx="2.9" ry="2.5" transform="rotate(145 58.1 98.0)" fill="#a8d8ec"/><ellipse cx="100.2" cy="101.8" rx="2.9" ry="1.9" transform="rotate(128 100.2 101.8)" fill="#a8d8ec"/><ellipse cx="59.1" cy="86.2" rx="1.9" ry="2.3" transform="rotate(178 59.1 86.2)" fill="#b4deee"/><ellipse cx="82.2" cy="83.3" rx="2.4" ry="2.0" transform="rotate(49 82.2 83.3)" fill="#a8d8ec"/><ellipse cx="63.5" cy="95.2" rx="2.2" ry="1.4" transform="rotate(166 63.5 95.2)" fill="#a8d8ec"/><ellipse cx="64.3" cy="97.2" rx="2.2" ry="1.4" transform="rotate(65 64.3 97.2)" fill="#c4e6f4"/><ellipse cx="74.8" cy="87.7" rx="2.6" ry="1.8" transform="rotate(161 74.8 87.7)" fill="#b4deee"/><ellipse cx="37.2" cy="96.0" rx="2.2" ry="2.0" transform="rotate(147 37.2 96.0)" fill="#b4deee"/><ellipse cx="97.1" cy="88.1" rx="2.4" ry="2.6" transform="rotate(119 97.1 88.1)" fill="#a8d8ec"/><ellipse cx="64.5" cy="80.4" rx="1.7" ry="2.6" transform="rotate(144 64.5 80.4)" fill="#b4deee"/><ellipse cx="107.9" cy="97.0" rx="3.1" ry="2.4" transform="rotate(10 107.9 97.0)" fill="#c4e6f4"/><ellipse cx="100.5" cy="99.3" rx="3.4" ry="1.8" transform="rotate(44 100.5 99.3)" fill="#b4deee"/><ellipse cx="75.3" cy="78.6" rx="1.9" ry="1.6" transform="rotate(47 75.3 78.6)" fill="#c4e6f4"/><ellipse cx="78.1" cy="102.8" rx="2.1" ry="2.0" transform="rotate(27 78.1 102.8)" fill="#c4e6f4"/><ellipse cx="22.1" cy="97.8" rx="3.3" ry="2.4" transform="rotate(15 22.1 97.8)" fill="#92cde6"/><ellipse cx="76.1" cy="89.3" rx="3.4" ry="2.2" transform="rotate(15 76.1 89.3)" fill="#92cde6"/><ellipse cx="39.0" cy="93.8" rx="3.2" ry="1.8" transform="rotate(7 39.0 93.8)" fill="#b4deee"/><ellipse cx="68.3" cy="78.6" rx="3.3" ry="1.6" transform="rotate(56 68.3 78.6)" fill="#a8d8ec"/><ellipse cx="71.0" cy="102.9" rx="2.9" ry="1.2" transform="rotate(13 71.0 102.9)" fill="#c4e6f4"/><ellipse cx="31.3" cy="85.4" rx="2.5" ry="2.6" transform="rotate(149 31.3 85.4)" fill="#b4deee"/><ellipse cx="23.1" cy="84.9" rx="3.0" ry="1.5" transform="rotate(102 23.1 84.9)" fill="#b4deee"/><ellipse cx="89.9" cy="98.8" rx="3.3" ry="2.3" transform="rotate(162 89.9 98.8)" fill="#c4e6f4"/><ellipse cx="47.6" cy="84.9" rx="2.7" ry="1.6" transform="rotate(61 47.6 84.9)" fill="#b4deee"/><ellipse cx="70.9" cy="76.5" rx="2.0" ry="1.7" transform="rotate(20 70.9 76.5)" fill="#92cde6"/><ellipse cx="105.2" cy="90.3" rx="3.0" ry="1.6" transform="rotate(149 105.2 90.3)" fill="#a8d8ec"/><ellipse cx="31.0" cy="92.0" rx="1.9" ry="2.1" transform="rotate(32 31.0 92.0)" fill="#c4e6f4"/><ellipse cx="57.4" cy="98.3" rx="2.8" ry="1.3" transform="rotate(41 57.4 98.3)" fill="#c4e6f4"/><ellipse cx="108.9" cy="86.6" rx="3.1" ry="1.7" transform="rotate(148 108.9 86.6)" fill="#c4e6f4"/><ellipse cx="79.0" cy="96.2" rx="3.2" ry="1.7" transform="rotate(60 79.0 96.2)" fill="#b4deee"/><ellipse cx="76.8" cy="95.1" rx="2.8" ry="1.6" transform="rotate(142 76.8 95.1)" fill="#c4e6f4"/><ellipse cx="80.1" cy="91.6" rx="1.6" ry="1.6" transform="rotate(62 80.1 91.6)" fill="#b4deee"/><ellipse cx="31.4" cy="85.0" rx="2.6" ry="2.4" transform="rotate(149 31.4 85.0)" fill="#c4e6f4"/><ellipse cx="44.3" cy="89.6" rx="2.2" ry="1.5" transform="rotate(110 44.3 89.6)" fill="#c4e6f4"/><ellipse cx="72.5" cy="79.7" rx="3.5" ry="2.7" transform="rotate(127 72.5 79.7)" fill="#c4e6f4"/><ellipse cx="80.0" cy="96.5" rx="1.9" ry="1.9" transform="rotate(75 80.0 96.5)" fill="#92cde6"/><ellipse cx="51.0" cy="100.9" rx="2.3" ry="1.9" transform="rotate(22 51.0 100.9)" fill="#c4e6f4"/><ellipse cx="43.0" cy="90.5" rx="2.7" ry="1.2" transform="rotate(165 43.0 90.5)" fill="#c4e6f4"/><ellipse cx="102.0" cy="102.8" rx="3.2" ry="2.1" transform="rotate(22 102.0 102.8)" fill="#a8d8ec"/><ellipse cx="47.4" cy="100.0" rx="2.1" ry="2.0" transform="rotate(150 47.4 100.0)" fill="#c4e6f4"/><ellipse cx="74.6" cy="97.5" rx="2.5" ry="1.8" transform="rotate(141 74.6 97.5)" fill="#c4e6f4"/><ellipse cx="49.1" cy="93.5" rx="3.1" ry="1.7" transform="rotate(107 49.1 93.5)" fill="#a8d8ec"/><ellipse cx="36.0" cy="85.9" rx="1.7" ry="2.0" transform="rotate(21 36.0 85.9)" fill="#b4deee"/><ellipse cx="37.3" cy="89.1" rx="2.1" ry="2.0" transform="rotate(60 37.3 89.1)" fill="#a8d8ec"/><ellipse cx="85.5" cy="96.8" rx="2.4" ry="1.9" transform="rotate(18 85.5 96.8)" fill="#92cde6"/><ellipse cx="58.2" cy="92.1" rx="3.0" ry="2.3" transform="rotate(135 58.2 92.1)" fill="#b4deee"/><ellipse cx="100.2" cy="87.4" rx="3.4" ry="2.2" transform="rotate(149 100.2 87.4)" fill="#a8d8ec"/><ellipse cx="71.8" cy="100.3" rx="2.7" ry="1.9" transform="rotate(78 71.8 100.3)" fill="#a8d8ec"/><ellipse cx="85.9" cy="100.1" rx="3.1" ry="2.1" transform="rotate(135 85.9 100.1)" fill="#92cde6"/><ellipse cx="99.7" cy="99.4" rx="2.1" ry="2.5" transform="rotate(44 99.7 99.4)" fill="#b4deee"/><ellipse cx="107.6" cy="87.8" rx="1.8" ry="2.6" transform="rotate(98 107.6 87.8)" fill="#b4deee"/><ellipse cx="104.7" cy="99.5" rx="3.6" ry="2.3" transform="rotate(157 104.7 99.5)" fill="#92cde6"/><ellipse cx="98.3" cy="86.2" rx="3.2" ry="1.5" transform="rotate(134 98.3 86.2)" fill="#a8d8ec"/><ellipse cx="69.3" cy="101.6" rx="1.6" ry="1.5" transform="rotate(54 69.3 101.6)" fill="#92cde6"/><ellipse cx="37.1" cy="86.8" rx="2.5" ry="2.0" transform="rotate(25 37.1 86.8)" fill="#c4e6f4"/><ellipse cx="101.1" cy="82.9" rx="2.6" ry="2.6" transform="rotate(176 101.1 82.9)" fill="#b4deee"/><ellipse cx="99.3" cy="79.9" rx="3.3" ry="2.2" transform="rotate(11 99.3 79.9)" fill="#92cde6"/><ellipse cx="95.7" cy="84.3" rx="2.5" ry="1.4" transform="rotate(158 95.7 84.3)" fill="#c4e6f4"/><ellipse cx="68.9" cy="80.9" rx="3.5" ry="2.7" transform="rotate(117 68.9 80.9)" fill="#92cde6"/><ellipse cx="85.9" cy="83.1" rx="3.4" ry="2.5" transform="rotate(128 85.9 83.1)" fill="#c4e6f4"/><ellipse cx="51.5" cy="101.8" rx="3.2" ry="1.8" transform="rotate(30 51.5 101.8)" fill="#92cde6"/><ellipse cx="32.6" cy="94.0" rx="2.1" ry="2.3" transform="rotate(90 32.6 94.0)" fill="#92cde6"/><ellipse cx="91.6" cy="84.8" rx="2.9" ry="2.5" transform="rotate(106 91.6 84.8)" fill="#c4e6f4"/><ellipse cx="108.0" cy="100.0" rx="2.0" ry="1.5" transform="rotate(24 108.0 100.0)" fill="#a8d8ec"/><ellipse cx="62.7" cy="76.2" rx="3.4" ry="1.2" transform="rotate(163 62.7 76.2)" fill="#a8d8ec"/><ellipse cx="74.8" cy="82.3" rx="2.1" ry="2.4" transform="rotate(16 74.8 82.3)" fill="#92cde6"/><ellipse cx="37.8" cy="95.3" rx="1.7" ry="2.4" transform="rotate(27 37.8 95.3)" fill="#a8d8ec"/><ellipse cx="76.7" cy="100.6" rx="2.8" ry="1.1" transform="rotate(160 76.7 100.6)" fill="#a8d8ec"/><ellipse cx="37.8" cy="90.1" rx="2.9" ry="1.7" transform="rotate(118 37.8 90.1)" fill="#a8d8ec"/><ellipse cx="67.5" cy="88.7" rx="3.3" ry="2.2" transform="rotate(94 67.5 88.7)" fill="#c4e6f4"/><ellipse cx="74.3" cy="96.4" rx="1.8" ry="1.8" transform="rotate(120 74.3 96.4)" fill="#92cde6"/><ellipse cx="91.2" cy="96.9" rx="2.1" ry="1.9" transform="rotate(40 91.2 96.9)" fill="#b4deee"/><ellipse cx="45.0" cy="79.9" rx="3.5" ry="1.2" transform="rotate(81 45.0 79.9)" fill="#c4e6f4"/><ellipse cx="50.6" cy="91.6" rx="2.8" ry="2.4" transform="rotate(91 50.6 91.6)" fill="#92cde6"/><ellipse cx="32.1" cy="79.2" rx="2.9" ry="2.0" transform="rotate(130 32.1 79.2)" fill="#c4e6f4"/><ellipse cx="26.8" cy="86.3" rx="3.0" ry="2.4" transform="rotate(133 26.8 86.3)" fill="#92cde6"/><ellipse cx="89.3" cy="88.5" rx="2.9" ry="1.9" transform="rotate(68 89.3 88.5)" fill="#c4e6f4"/><ellipse cx="36.1" cy="94.0" rx="3.3" ry="2.4" transform="rotate(11 36.1 94.0)" fill="#b4deee"/><ellipse cx="63.1" cy="94.3" rx="3.0" ry="2.6" transform="rotate(23 63.1 94.3)" fill="#c4e6f4"/><ellipse cx="34.7" cy="87.2" rx="3.1" ry="1.2" transform="rotate(43 34.7 87.2)" fill="#c4e6f4"/><ellipse cx="30.0" cy="90.1" rx="2.5" ry="2.6" transform="rotate(175 30.0 90.1)" fill="#c4e6f4"/><ellipse cx="48.0" cy="77.4" rx="3.3" ry="1.8" transform="rotate(15 48.0 77.4)" fill="#c4e6f4"/><ellipse cx="54.0" cy="83.8" rx="3.6" ry="2.1" transform="rotate(7 54.0 83.8)" fill="#b4deee"/><ellipse cx="73.5" cy="102.8" rx="3.1" ry="2.0" transform="rotate(164 73.5 102.8)" fill="#c4e6f4"/><ellipse cx="62.7" cy="85.4" rx="3.3" ry="1.7" transform="rotate(141 62.7 85.4)" fill="#c4e6f4"/><ellipse cx="58.8" cy="81.1" rx="3.2" ry="2.4" transform="rotate(86 58.8 81.1)" fill="#b4deee"/><ellipse cx="40.9" cy="87.6" rx="2.2" ry="1.8" transform="rotate(179 40.9 87.6)" fill="#c4e6f4"/><ellipse cx="97.9" cy="79.9" rx="2.4" ry="1.2" transform="rotate(124 97.9 79.9)" fill="#92cde6"/><ellipse cx="105.5" cy="92.0" rx="2.6" ry="2.3" transform="rotate(92 105.5 92.0)" fill="#c4e6f4"/><ellipse cx="45.6" cy="84.5" rx="1.9" ry="2.6" transform="rotate(65 45.6 84.5)" fill="#c4e6f4"/><ellipse cx="85.7" cy="100.3" rx="1.6" ry="1.6" transform="rotate(69 85.7 100.3)" fill="#a8d8ec"/><ellipse cx="97.2" cy="85.1" rx="2.1" ry="2.5" transform="rotate(120 97.2 85.1)" fill="#92cde6"/><ellipse cx="56.7" cy="80.9" rx="1.7" ry="1.4" transform="rotate(107 56.7 80.9)" fill="#a8d8ec"/><ellipse cx="40.4" cy="85.9" rx="2.6" ry="2.2" transform="rotate(93 40.4 85.9)" fill="#92cde6"/><ellipse cx="49.6" cy="87.1" rx="2.4" ry="2.5" transform="rotate(150 49.6 87.1)" fill="#b4deee"/><ellipse cx="57.7" cy="85.2" rx="3.3" ry="1.5" transform="rotate(53 57.7 85.2)" fill="#92cde6"/><ellipse cx="75.8" cy="78.1" rx="3.3" ry="2.3" transform="rotate(87 75.8 78.1)" fill="#a8d8ec"/><ellipse cx="93.2" cy="102.3" rx="2.2" ry="2.2" transform="rotate(165 93.2 102.3)" fill="#c4e6f4"/><ellipse cx="71.1" cy="84.2" rx="1.8" ry="2.3" transform="rotate(67 71.1 84.2)" fill="#92cde6"/><ellipse cx="29.9" cy="86.4" rx="2.4" ry="1.2" transform="rotate(69 29.9 86.4)" fill="#92cde6"/><ellipse cx="47.0" cy="94.4" rx="2.0" ry="2.6" transform="rotate(36 47.0 94.4)" fill="#c4e6f4"/><ellipse cx="52.9" cy="94.7" rx="2.6" ry="2.3" transform="rotate(163 52.9 94.7)" fill="#c4e6f4"/><ellipse cx="64.1" cy="81.5" rx="3.3" ry="1.6" transform="rotate(165 64.1 81.5)" fill="#b4deee"/><ellipse cx="32.6" cy="100.4" rx="3.4" ry="1.5" transform="rotate(68 32.6 100.4)" fill="#92cde6"/><ellipse cx="63.3" cy="83.4" rx="2.1" ry="1.2" transform="rotate(62 63.3 83.4)" fill="#92cde6"/><ellipse cx="71.8" cy="81.6" rx="2.9" ry="1.4" transform="rotate(84 71.8 81.6)" fill="#92cde6"/><ellipse cx="106.0" cy="84.5" rx="2.8" ry="2.6" transform="rotate(139 106.0 84.5)" fill="#a8d8ec"/><ellipse cx="76.6" cy="85.9" rx="2.4" ry="1.6" transform="rotate(149 76.6 85.9)" fill="#b4deee"/><ellipse cx="55.6" cy="100.4" rx="1.7" ry="1.3" transform="rotate(91 55.6 100.4)" fill="#92cde6"/><ellipse cx="65.6" cy="87.7" rx="1.6" ry="2.1" transform="rotate(49 65.6 87.7)" fill="#92cde6"/><ellipse cx="81.9" cy="80.8" rx="1.6" ry="2.0" transform="rotate(71 81.9 80.8)" fill="#c4e6f4"/><ellipse cx="70.1" cy="98.6" rx="3.1" ry="1.2" transform="rotate(148 70.1 98.6)" fill="#92cde6"/><ellipse cx="45.2" cy="77.0" rx="1.6" ry="2.4" transform="rotate(37 45.2 77.0)" fill="#b4deee"/><ellipse cx="82.4" cy="102.0" rx="3.2" ry="1.4" transform="rotate(112 82.4 102.0)" fill="#b4deee"/><ellipse cx="92.8" cy="82.5" rx="2.4" ry="1.7" transform="rotate(120 92.8 82.5)" fill="#b4deee"/><ellipse cx="42.9" cy="81.2" rx="2.2" ry="1.4" transform="rotate(92 42.9 81.2)" fill="#c4e6f4"/><ellipse cx="99.2" cy="102.7" rx="3.2" ry="2.5" transform="rotate(56 99.2 102.7)" fill="#b4deee"/><ellipse cx="67.1" cy="93.7" rx="1.7" ry="2.1" transform="rotate(74 67.1 93.7)" fill="#b4deee"/><ellipse cx="26.7" cy="81.4" rx="2.6" ry="2.4" transform="rotate(71 26.7 81.4)" fill="#92cde6"/><ellipse cx="54.4" cy="93.8" rx="2.0" ry="2.5" transform="rotate(37 54.4 93.8)" fill="#c4e6f4"/><ellipse cx="71.9" cy="86.2" rx="3.0" ry="2.1" transform="rotate(150 71.9 86.2)" fill="#c4e6f4"/><ellipse cx="33.0" cy="84.9" rx="2.9" ry="1.5" transform="rotate(33 33.0 84.9)" fill="#a8d8ec"/><ellipse cx="63.5" cy="94.1" rx="3.2" ry="2.6" transform="rotate(48 63.5 94.1)" fill="#92cde6"/><ellipse cx="58.9" cy="92.3" rx="2.4" ry="2.6" transform="rotate(178 58.9 92.3)" fill="#a8d8ec"/><ellipse cx="35.8" cy="102.9" rx="3.3" ry="1.4" transform="rotate(64 35.8 102.9)" fill="#a8d8ec"/><ellipse cx="57.6" cy="100.2" rx="3.3" ry="2.5" transform="rotate(31 57.6 100.2)" fill="#a8d8ec"/><ellipse cx="49.2" cy="97.2" rx="3.3" ry="1.6" transform="rotate(71 49.2 97.2)" fill="#b4deee"/><ellipse cx="89.4" cy="102.4" rx="2.4" ry="2.2" transform="rotate(98 89.4 102.4)" fill="#c4e6f4"/><ellipse cx="60.9" cy="98.2" rx="2.7" ry="2.5" transform="rotate(158 60.9 98.2)" fill="#b4deee"/><ellipse cx="32.6" cy="83.4" rx="1.6" ry="2.0" transform="rotate(26 32.6 83.4)" fill="#b4deee"/><ellipse cx="46.1" cy="80.6" rx="2.6" ry="1.7" transform="rotate(47 46.1 80.6)" fill="#a8d8ec"/><ellipse cx="88.9" cy="93.4" rx="1.6" ry="1.7" transform="rotate(25 88.9 93.4)" fill="#c4e6f4"/><ellipse cx="109.3" cy="85.8" rx="1.7" ry="1.7" transform="rotate(101 109.3 85.8)" fill="#a8d8ec"/><ellipse cx="40.9" cy="91.9" rx="3.3" ry="1.5" transform="rotate(34 40.9 91.9)" fill="#92cde6"/><ellipse cx="98.1" cy="102.8" rx="2.5" ry="2.4" transform="rotate(130 98.1 102.8)" fill="#c4e6f4"/><ellipse cx="97.4" cy="101.4" rx="2.7" ry="2.2" transform="rotate(49 97.4 101.4)" fill="#a8d8ec"/><ellipse cx="88.3" cy="83.0" rx="2.6" ry="1.1" transform="rotate(38 88.3 83.0)" fill="#92cde6"/><ellipse cx="23.0" cy="89.3" rx="3.2" ry="2.4" transform="rotate(132 23.0 89.3)" fill="#b4deee"/><ellipse cx="49.1" cy="89.4" rx="2.9" ry="2.4" transform="rotate(138 49.1 89.4)" fill="#b4deee"/><ellipse cx="57.4" cy="94.5" rx="2.1" ry="2.6" transform="rotate(4 57.4 94.5)" fill="#c4e6f4"/><ellipse cx="42.0" cy="85.3" rx="2.3" ry="2.2" transform="rotate(146 42.0 85.3)" fill="#92cde6"/><ellipse cx="77.2" cy="87.0" rx="2.2" ry="1.2" transform="rotate(118 77.2 87.0)" fill="#a8d8ec"/><ellipse cx="45.3" cy="80.2" rx="2.0" ry="1.2" transform="rotate(24 45.3 80.2)" fill="#92cde6"/><ellipse cx="81.9" cy="79.1" rx="1.8" ry="1.3" transform="rotate(63 81.9 79.1)" fill="#b4deee"/><ellipse cx="23.9" cy="85.6" rx="1.7" ry="1.3" transform="rotate(171 23.9 85.6)" fill="#c4e6f4"/><ellipse cx="27.9" cy="91.1" rx="2.8" ry="1.6" transform="rotate(85 27.9 91.1)" fill="#c4e6f4"/><ellipse cx="65.9" cy="96.6" rx="3.4" ry="2.4" transform="rotate(13 65.9 96.6)" fill="#b4deee"/><ellipse cx="105.4" cy="83.3" rx="2.0" ry="1.7" transform="rotate(178 105.4 83.3)" fill="#c4e6f4"/></g><path d="M43.500 73 Q63 79 82.400 73" stroke="#8cc8e0" stroke-width="1.600" fill="none"/><path d="M31 101 Q33 130 31 168 M101 101 Q99 130 101.500 168" stroke="#6a7a84" stroke-width=".8" fill="none" opacity=".6"/><path d="M45 112 Q46 135 44 168 M88 112 Q87 135 89 168" stroke="#88c0d8" stroke-width=".7" fill="none" opacity=".8"/></g></svg></div><div class="pt"><span class="bg"><span style="letter-spacing:-0.045px">Chovala chabuluu</span></span></div><div class="plus">+</div><div class="pp"><span style="letter-spacing:-0.257px">20.00 USD</span></div><div class="pq"><span style="letter-spacing:0.089px">172.000 mayunitsi</span></div></div>
<div class="selbox" style="left:8px;top:627px"></div>
<div class="prod" style="left:11px;top:630px"><div class="pimg"><svg viewBox="0 0 130 168"><defs><filter id="sf3" x="-5%" y="-5%" width="110%" height="110%"><feGaussianBlur stdDeviation=".7"/></filter><linearGradient id="p3h" x1="0" y1="0" x2="1" y2="0"><stop offset="0" stop-color="#5e351c"/><stop offset=".3" stop-color="#94603a"/><stop offset=".55" stop-color="#754526"/><stop offset=".8" stop-color="#9a663c"/><stop offset="1" stop-color="#623820"/></linearGradient><linearGradient id="p3d" x1="0" y1="0" x2="1" y2="0"><stop offset="0" stop-color="#e4c428"/><stop offset=".3" stop-color="#f6e048"/><stop offset=".6" stop-color="#f0d838"/><stop offset="1" stop-color="#e0bc24"/></linearGradient><radialGradient id="p3s" cx=".5" cy=".45" r=".62"><stop offset="0" stop-color="#efbe98"/><stop offset=".7" stop-color="#e0a47c"/><stop offset="1" stop-color="#c4855c"/></radialGradient></defs><g filter="url(#sf3)"><path d="M60.700 .8 C46 1 38.500 10 37.300 23 C36 40 35 60 31.900 76 L48 78 L82 78 C84 50 84 30 81 16 C78 5 70 .6 60.700 .8Z" fill="#643a20"/><path d="M17.900 127 Q20 110 24 100 L30 128 Q28 150 28.800 168 H16 Q19 145 17.900 127Z M96 119 L112 108 Q120 135 121.500 168 H108 Q104 140 96 119Z" fill="#dda27a"/><path d="M47 55 H69.500 V73 L74 77 L54.400 98 L40 75 L47 72Z" fill="#d89c74"/><path d="M43.500 36 C43 23 49 15 59 15 C69 15 75 23 74.600 36 C74.200 47 69 56.500 59.500 60.600 C50 56.500 44 47 43.500 36Z" fill="url(#p3s)"/><path d="M42 74.600 L54.400 95 L72 76 L87 72.300 L101 74.600 L123.600 99.500 L96.400 119.800 L92 121 Q90 140 93.300 168 H24.900 Q30 145 27.200 127 L26.400 127.500 L7.800 112 L20.200 84Z" fill="url(#p3d)"/><path d="M54.400 95 L72 76 M54.400 95 Q70 110 80 137 M27 127 Q40 118 54 95 M30 137 H88 M30 149 H89" stroke="#d0ac1c" stroke-width="1" fill="none"/><path d="M29 138 H89 V148.500 H29.500Z" fill="#f2dc40"/><path d="M34 149 Q30 158 33 168 H38 Q34 158 38 149Z" fill="#d4b01e"/><path d="M60.700 .8 C48 6 45 16 43.800 28 C43 40 44.500 50 42.500 60 C41 68 38 73 31.900 76 C35 60 36 40 37.300 23 C38.500 10 46 1 60.700 .8Z" fill="url(#p3h)"/><path d="M60.700 .8 C70 6 74 14 75 26 C76 38 73.500 50 73 59 C74 72 80 84 81 93 C82 110 82 125 82.400 140 L84 146 C88 135 93 120 94.900 109 C94 95 88 80 85 68 C82.500 55 83.500 35 81 16 C78 5 70 .6 60.700 .8Z" fill="url(#p3h)"/><g fill="#3a2416"><ellipse cx="51" cy="33.400" rx="3.200" ry="1.500"/><ellipse cx="68" cy="33.600" rx="3" ry="1.500"/></g><path d="M46 29.600 Q51 27 56 29.600 M64 29.600 Q68.500 27.600 72.500 30" stroke="#4a2c18" stroke-width="1.300" fill="none"/><path d="M52.500 49.600 Q58.500 46.800 64.500 49.600 Q58.500 54.800 52.500 49.600Z" fill="#d07a78"/><path d="M58 37 Q56.500 43 58.500 44.400 Q61.500 44.600 62.500 43" stroke="#c48a62" stroke-width="1" fill="none"/></g></svg>
</div><div class="pt"><span class="bg"><span style="letter-spacing:-0.225px">Chovala chachikasu</span></span></div><div class="plus">+</div><div class="pp"><span style="letter-spacing:-0.163px">9.50 USD</span></div><div class="pq"><span style="letter-spacing:0.108px">56.000 mayunitsi</span></div></div>
<div class="prod" style="left:427px;top:630px"><div class="pimg"><svg viewBox="0 0 130 168"><defs><filter id="sf4" x="-5%" y="-5%" width="110%" height="110%"><feGaussianBlur stdDeviation=".7"/></filter><linearGradient id="p4j" x1="0" y1="0" x2="1" y2="0"><stop offset="0" stop-color="#2e2a2e"/><stop offset=".25" stop-color="#48424a"/><stop offset=".6" stop-color="#3e383e"/><stop offset=".85" stop-color="#4a444a"/><stop offset="1" stop-color="#2c282c"/></linearGradient><linearGradient id="p4s" x1="0" y1="0" x2="1" y2="0"><stop offset="0" stop-color="#f3cdb3"/><stop offset=".55" stop-color="#eec0a2"/><stop offset="1" stop-color="#cf987a"/></linearGradient><linearGradient id="p4h" x1="0" y1="0" x2="0" y2="1"><stop offset="0" stop-color="#6e4028"/><stop offset="1" stop-color="#42261a"/></linearGradient></defs><g filter="url(#sf4)"><path d="M11.700 96.400 Q13 92 20 90 L46.700 76.200 L60 84 L84 74.600 L100 84 L116 90 Q121.300 92 121.800 97 Q126 130 127.500 168 H7 Q7 130 11.700 96.400Z" fill="url(#p4j)"/><path d="M49.800 73 L84 74.600 L93.300 108.900 L91 146.200 L88.600 160 L78 134 Z" fill="#f4f4f8"/><path d="M60 58 H82.400 L83.500 76 L73.500 89 L56 74Z" fill="#d9a686"/><path d="M49.800 73 L58 80 L64 92 L60 95Z M84 74.600 L80 82 L78 92 L84 90Z" fill="#e0e2ea"/><path d="M41.200 30 C41 24 50 22 60 23 C72 24 80 28 82 36 C86 38 87 46 83 50 C82 58 78 64 72 69 C66 74 60 75 55 73.600 C50 71 48.500 66 47.500 62 C45.500 60 46 57 46.500 55 C44 52 44.500 50 45.500 48 C42 44 41.400 36 41.200 30Z" fill="url(#p4s)"/><path d="M37.300 16 C38 8 45 4 51.300 3.900 C58 3.300 64 3.600 70 4.700 C80 7 86 13 86.300 20.200 C86.600 27 86 33 84.800 37.300 L82 40 C81 36 80 33 78 31.500 L77 38 C76 33 74 30.500 71.500 29.500 C60 29 48 27.800 38.900 27.200 C37.600 23 37 19 37.300 16Z" fill="url(#p4h)"/><path d="M46 42.500 Q49.500 41.200 53 42.600 M60.500 42 Q65 40.200 69.500 42" stroke="#7a5038" stroke-width="1.100" fill="none"/><g fill="#4a3a30"><ellipse cx="49.500" cy="45" rx="2.400" ry="1.100"/><ellipse cx="64.500" cy="44.600" rx="2.800" ry="1.200"/></g><path d="M49 62.200 Q53 61 58 62.400 Q53.500 64.800 49 62.200Z" fill="#c98478"/><path d="M69.500 88.500 L77 87 L79.500 91.500 L88.500 150 L86.800 158 L80 140 L73 92.500Z" fill="#1e1e22"/><path d="M46.700 76.200 L43 84 L50 86 L88.600 161.700 L78 134 L50.500 74Z" fill="#2c282c"/><path d="M84 74.600 L90 80 L98 108 L92.500 146 L88.600 161.700 L93.600 110 Z" fill="#302c30"/><path d="M88.600 161.700 V168" stroke="#2a2428" stroke-width="1"/></g></svg></div><div class="pt"><span class="bg"><span style="letter-spacing:-0.206px">Suti ya amuna akuda</span></span></div><div class="plus">+</div><div class="pp"><span style="letter-spacing:-0.246px">15.00 USD</span></div><div class="pq"><span style="letter-spacing:0.108px">70.000 mayunitsi</span></div></div>
<div class="prod" style="left:11px;top:808px"><div class="pimg"><svg viewBox="0 0 130 168"><defs><filter id="sf5" x="-5%" y="-5%" width="110%" height="110%"><feGaussianBlur stdDeviation=".7"/></filter><linearGradient id="p5j" x1="0" y1="0" x2="1" y2="0"><stop offset="0" stop-color="#18285e"/><stop offset=".22" stop-color="#263c80"/><stop offset=".5" stop-color="#203474"/><stop offset=".8" stop-color="#283e82"/><stop offset="1" stop-color="#16265a"/></linearGradient><radialGradient id="p5s" cx=".5" cy=".42" r=".62"><stop offset="0" stop-color="#f6d4bc"/><stop offset=".7" stop-color="#ecbc9e"/><stop offset="1" stop-color="#c99070"/></radialGradient><linearGradient id="p5h" x1="0" y1="0" x2="1" y2="1"><stop offset="0" stop-color="#8a5a38"/><stop offset="1" stop-color="#4e2e1c"/></linearGradient></defs><g filter="url(#sf5)"><path d="M12.400 85.500 L46.700 70 L68 82 L87 68.400 L119.800 84 Q123 86 124 92 L128.300 140 V168 H2 L3.100 140 L8 92 Q9 87 12.400 85.500Z" fill="url(#p5j)"/><path d="M51.300 66 L68 64 L84 66 L82 90 L77.800 168 H59 L55 90Z" fill="#172068"/><path d="M60 140 H77 V168 H60Z" fill="#101858"/><path d="M46.700 70 L52 64 L37.300 80.900 L59 155.500 L56 100Z M87 68.400 L83 64 L97.200 80.900 L79.300 152.400 L81 100Z" fill="#2c448a"/><path d="M46.700 70 L37.300 80.900 L59 155.500 L48 100 L52 72Z" fill="#24387a"/><path d="M87 68.400 L97.200 80.900 L79.300 152.400 L88 100 L83.500 72Z" fill="#24387a"/><rect x="90.200" y="116.600" width="18.700" height="3.200" fill="#4d7cc4"/><path d="M21 168 L21.800 149 L23 168Z M113.600 168 L114.400 150 L115.600 168Z" fill="#c8c8d0"/><circle cx="67.500" cy="121" r="1.100" fill="#b8bcc8"/><circle cx="67" cy="99" r=".8" fill="#5a648c"/><path d="M55 56 H81 V68 L68 72Z" fill="#d4a080"/><path d="M46.700 36 Q45.500 30 49 30 L50.500 31 C50 22 56 17 68 17 C80 17 86 22 85.500 31 L87.500 30 Q91 30 90.200 36 Q89.500 43 86 44 C84.500 56 78 68 68.400 70.200 C58 68 52 56 50.500 44 Q47.500 43 46.700 36Z" fill="url(#p5s)"/><path d="M51.500 48 C53 58 58 67 68.400 70.200 C78 67 83.500 58 85 48 C82 56 78 60 74 60.500 Q68.400 57 62.500 60.500 C58 60 54 56 51.500 48Z" fill="#9c6c4c" opacity=".75"/><path d="M66.900 1.200 C56 1 48 7 46.700 15.500 C46.200 22 47 28 48.200 31 L51.300 33 C51 28 51.500 25 52.500 23 C58 20 64 18.500 72 19 C78 19.500 82 21 84 23 C85 26 85.500 29 85 33 L87 31 C88.500 26 88.600 21 87.900 17 C86 7 78 1.500 66.900 1.200Z" fill="url(#p5h)"/><g fill="#3c2618"><ellipse cx="58.500" cy="36.600" rx="3" ry="1.500"/><ellipse cx="76.500" cy="36.600" rx="3" ry="1.500"/></g><path d="M53.500 32.400 Q58.500 30 63 32.800 M72 32.800 Q76.500 30 81.500 32.400" stroke="#4a2c1a" stroke-width="1.500" fill="none"/><path d="M62.500 55.600 Q68 54 73.500 55.600 Q68 58.400 62.500 55.600Z" fill="#c07868"/><path d="M52 73.500 Q58 75 64.500 78 L67.700 77.500 L71 78 Q77 75 82.400 73 Q83.500 80 82.400 86.300 Q76 84 71 81 L67.700 81.500 L64.500 81 Q58 84 52 86.300 Q51 80 52 73.500Z" fill="#3c3650"/><path d="M54 76 L60 80 M56 83 L62 79 M74 79 L80 76 M75 82 L81 84" stroke="#a08868" stroke-width=".9" opacity=".8"/></g></svg>
</div><div class="pt"><span class="bg"><span style="letter-spacing:-0.076px">Suti yaamuna ya buluu</span></span></div><div class="pp"><span style="letter-spacing:-0.246px">15.00 USD</span></div><div class="pq"><span style="letter-spacing:0.144px">5.000 mayunitsi</span></div></div>
<div class="prod" style="left:427px;top:808px"><div class="pimg"><svg viewBox="0 0 130 168"><defs><filter id="sf6" x="-5%" y="-5%" width="110%" height="110%"><feGaussianBlur stdDeviation=".7"/></filter><linearGradient id="p6j" x1="0" y1="0" x2="1" y2="0"><stop offset="0" stop-color="#0a6a52"/><stop offset=".25" stop-color="#15896a"/><stop offset=".5" stop-color="#0f7a5e"/><stop offset=".78" stop-color="#168a6a"/><stop offset="1" stop-color="#0a6850"/></linearGradient><radialGradient id="p6s" cx=".5" cy=".42" r=".62"><stop offset="0" stop-color="#f2caa8"/><stop offset=".7" stop-color="#e2ae8a"/><stop offset="1" stop-color="#bc8460"/></radialGradient><linearGradient id="p6h" x1="0" y1="0" x2="0" y2="1"><stop offset="0" stop-color="#a06a38"/><stop offset=".5" stop-color="#6a4226"/><stop offset="1" stop-color="#3c2618"/></linearGradient><linearGradient id="p6t" x1="0" y1="0" x2="1" y2="0"><stop offset="0" stop-color="#18b074"/><stop offset=".45" stop-color="#44e0a4"/><stop offset="1" stop-color="#14a068"/></linearGradient></defs><g filter="url(#sf6)"><path d="M14.800 84 L49.800 69.200 L69 80 L87 70 L119.800 84.800 Q123.500 87 124.500 93 L127.500 120 V168 H3.100 V108.900 L9.500 92 Q10.500 86 14.800 84Z" fill="url(#p6j)"/><path d="M23.300 133.700 L14 157 L30.300 161.700Z M112 135.300 L122.900 154 L107.300 163.300Z" fill="#666"/><path d="M51.300 66.900 L68 70 L84.800 68.400 L82 100 L69.200 150.500 L56 100Z" fill="#56c45a"/><path d="M51.300 66.900 L54.400 89.400 L67 82Z M84.800 68.400 L80.900 91 L70 82Z" fill="#62d066"/><path d="M64.500 82 L72.500 81.500 L73.500 86.500 L75.500 132 L69.200 149.500 L63.500 132 L65 86.500Z" fill="url(#p6t)"/><path d="M49.800 69.200 L40 82 L69.200 151 L55 100 L51.500 72Z M87 70 L96 82 L69.200 151 L82.500 100 L85 72Z" fill="#0d7257"/><path d="M54.400 58 H82.400 V70 L68.500 76 L54.400 70Z" fill="#cf9a76"/><path d="M46.700 37 Q45.500 31 49 31 L50.500 32 C50 24 56 18 68.400 18 C81 18 87 24 86.300 32 L88.500 31 Q92 31 91 37 Q90.500 44 87 45 C85.500 56 79 67 69.200 69.400 C59 67 52.500 56 50.500 45 Q47.500 44 46.700 37Z" fill="url(#p6s)"/><path d="M51.500 48 C53 57 59 66.500 69.200 69.400 C79 66.500 84.500 57 86 48 C83 55 79 59 75 59.500 Q69.200 55 63 59.500 C59 59 54.500 55 51.500 48Z" fill="#9a6a4a" opacity=".6"/><path d="M68.400 .8 C57 .5 49 7 46.700 17 C46 24 47.500 30 49 34 L51.500 35 C51 30 51.500 27 52.500 24 C58 21 64 20 72 20.500 C78 21 83 22 85 24 C86 27 86.500 31 86 35 L87.900 34 C89.500 28 90 22 89.400 17 C87 7 80 1 68.400 .8Z" fill="url(#p6h)"/><g fill="#3a2a20"><ellipse cx="59" cy="37" rx="3" ry="1.500"/><ellipse cx="77.500" cy="37" rx="3" ry="1.500"/></g><path d="M54 33 Q59 30.600 63.500 33.400 M73 33.400 Q77.500 30.600 82.500 33" stroke="#4a2e1c" stroke-width="1.500" fill="none"/><path d="M62.500 53.800 Q68.800 52 75 53.800 Q68.800 57.400 62.500 53.800Z" fill="#c87e6a"/><path d="M61 51.500 Q68.800 49 76.500 51.500" stroke="#8a5a3c" stroke-width="1.200" fill="none" opacity=".7"/></g></svg>
</div><div class="pt"><span class="bg"><span style="letter-spacing:0.056px">Zovala zazimuna zobiriwira</span></span></div><div class="plus">+</div><div class="pp"><span style="letter-spacing:-0.246px">15.00 USD</span></div><div class="pq"><span style="letter-spacing:0.077px">14.000 mayunitsi</span></div></div>
<div class="vbtn" style="left:3px"><svg viewBox="0 0 32 32"><rect x="1.500" y="2.500" width="27" height="26" rx="1" fill="#fff" stroke="#4a7cc0" stroke-width="1"/><rect x="1.500" y="2.500" width="27" height="6.500" fill="#4f84c8" stroke="#3a6cb0" stroke-width="1"/><g stroke="#7aa6d8" stroke-width="1.200" fill="none"><path d="M2 15.500 H28 M2 20.500 H28 M2 24.500 H28 M10.500 9 V28 M19.500 9 V28"/></g><rect x="1.500" y="9" width="27" height="19.500" fill="none" stroke="#4a7cc0" stroke-width="1"/></svg>
</div>
<div class="vbtn" style="left:54px"><div style="position:absolute;left:-1px;top:0;width:49px;height:41px"><svg viewBox="0 0 32 32"><defs><linearGradient id="cdg" x1="0" y1="0" x2="0" y2="1"><stop offset="0" stop-color="#b4d4f0"/><stop offset="1" stop-color="#78aadc"/></linearGradient></defs><g fill="url(#cdg)" stroke="#3f74bc" stroke-width="1"><rect x="1.500" y="3.500" width="12.500" height="6.500" rx="1"/><rect x="16.500" y="3.500" width="12.500" height="6.500" rx="1"/><rect x="1.500" y="12.500" width="12.500" height="6.500" rx="1"/><rect x="16.500" y="12.500" width="12.500" height="6.500" rx="1"/><rect x="1.500" y="21.500" width="12.500" height="6.500" rx="1"/><rect x="16.500" y="21.500" width="12.500" height="6.500" rx="1"/></g></svg>
</div></div>
</div>
<div id="split"></div>
<div id="R">
<div class="rb" style="left:894px;top:0;width:1px;height:1080px;background:#a9a9a9"></div>
<div class="rb" style="left:1919px;top:0;width:1px;height:1080px;background:#dcdcdc"></div>
<div class="rb" style="left:894px;top:1078px;width:1026px;height:1px;background:#b8b8b8"></div>
<div class="rb" style="left:894px;top:0;width:1026px;height:1px;background:#c9b9a9"></div>
<div class="hdr" id="rh" style="left:895px;top:1px;width:1024px;height:42px"><span><span style="letter-spacing:-0.692px">Gulitsa</span></span></div>
<svg class="abs" style="position:absolute;left:1886px;top:11px;width:22px;height:22px" viewBox="0 0 22 22"><path d="M2.500 2.500 L19.500 19.500 M19.500 2.500 L2.500 19.500" stroke="#fff" stroke-width="3.800" stroke-linecap="round"/><path d="M2.500 2.500 L19.500 19.500 M19.500 2.500 L2.500 19.500" stroke="#000" stroke-width="2" stroke-linecap="round"/></svg>
<div class="lbl tah" style="left:898px;top:55px"><span style="letter-spacing:-0.234px">Wogulitsa</span></div>
<div class="lockb" style="left:988px;top:44px;width:34px;height:34px"><svg viewBox="0 0 28 30"><defs><linearGradient id="lkb" x1="0" y1="0" x2="0" y2="1"><stop offset="0" stop-color="#f8d070"/><stop offset=".5" stop-color="#eeb33a"/><stop offset="1" stop-color="#d8901c"/></linearGradient><linearGradient id="lks" x1="0" y1="0" x2="1" y2="0"><stop offset="0" stop-color="#8a8f96"/><stop offset=".5" stop-color="#e2e5e8"/><stop offset="1" stop-color="#8a8f96"/></linearGradient></defs><path d="M5.500 14 V9.500 Q5.500 1.700 14 1.700 Q22.500 1.700 22.500 9.500 V14" fill="none" stroke="#6e747c" stroke-width="4.400"/><path d="M5.500 14 V9.500 Q5.500 1.700 14 1.700 Q22.500 1.700 22.500 9.500 V14" fill="none" stroke="url(#lks)" stroke-width="3"/><rect x="2.300" y="12.700" width="23.600" height="15.800" rx="1.600" fill="url(#lkb)" stroke="#a8701a" stroke-width=".8"/><path d="M14 16.600 A2.100 2.100 0 0 1 15.300 20.400 L16 24.600 H12 L12.700 20.400 A2.100 2.100 0 0 1 14 16.600Z" fill="#2a2a30"/></svg>
</div>
<div class="inp dis tah" style="left:1024px;top:46px;width:446px;height:29px;font-size:13px;line-height:25px;padding-left:1px"><span style="letter-spacing:-0.179px">Wogwira ntchito #2</span></div>
<div class="arr lt" style="left:1453px;top:59px"></div>
<div class="inp dis tah" style="left:1472px;top:46px;width:446px;height:29px;font-size:13px;line-height:25px;padding-left:1px"><span style="letter-spacing:-0.484px">Dzina lalamulo</span></div>
<div class="arr lt" style="left:1900px;top:59px"></div>
<div class="lbl tah" style="left:898px;top:86px"><span style="letter-spacing:-0.323px">Makasitomala (F10)</span></div>
<div class="inp tah" style="left:1024px;top:77px;width:446px;height:29px"></div>
<div class="inp dis tah" style="left:1472px;top:77px;width:446px;height:29px;font-size:13px;line-height:25px;padding-left:1px"><span style="letter-spacing:-0.240px">09.12.2022</span></div>
<div class="arr lt" style="left:1900px;top:90px"></div>
<div class="tah" style="left:898px;top:114px;font-size:13px;line-height:16px;font-weight:bold;white-space:nowrap;color:#222"><span style="letter-spacing:-0.202px">kasitomala wofikira, Popanda kuchotsera</span></div>
<div class="bar tah" style="left:895px;top:137px;height:26px;line-height:27px"><span style="letter-spacing:-0.264px">Mndandanda wogulitsa</span></div>
<div class="lbl tah" style="left:899px;top:168px"><span style="letter-spacing:-0.123px">Mtengo (F7) и Barcode (F8)</span></div>
<div class="inp tah" style="left:899px;top:182px;width:99px;height:29px;font-size:18.800px;line-height:27px;padding-left:2px"><span style="letter-spacing:-0.371px">1.000</span></div>
<div class="arr" style="left:981px;top:188px;transform:rotate(180deg);border-left-width:3.500px;border-right-width:3.500px"></div>
<div class="arr" style="left:981px;top:201px;border-left-width:3.500px;border-right-width:3.500px"></div>
<div class="tah" style="left:1004px;top:186px;font-size:15px;line-height:20px;color:#333;width:12px;text-align:center">x</div>
<div class="inp tah" style="left:1024px;top:182px;width:446px;height:29px;font-size:18.800px;line-height:27px;padding-left:2px"><span style="letter-spacing:0.135px">0000000000000</span></div>
<div class="lbl tah" style="left:1472px;top:168px"><span style="letter-spacing:-0.333px">Dzina lazogulitsa</span></div>
<div class="inp tah" style="left:1472px;top:182px;width:446px;height:29px"></div>
<div id="tbl" class="tah">
<div style="left:895px;top:213px;width:1023px;height:235px;border:1px solid #b8b8b8;border-right:none;background:#f5f5f5"></div>
<div class="th" style="left:907px;top:214px;width:461px;height:46px"><span><span style="letter-spacing:-0.469px">Dzina</span></span></div>
<div class="th" style="left:1368px;top:214px;width:140px;height:46px"><span><span style="letter-spacing:-0.374px">Kuchotsera</span></span></div>
<div class="th" style="left:1508px;top:214px;width:137px;height:46px"><span><span style="letter-spacing:-0.417px">Mtengo</span></span></div>
<div class="th" style="left:1645px;top:214px;width:99px;height:46px"><span><span style="letter-spacing:-0.326px">Kuchuluka</span></span></div>
<div class="th" style="left:1744px;top:214px;width:174px;height:46px"><span><span style="letter-spacing:-0.203px">Chiwerengero</span></span></div>
<div style="left:906px;top:214px;width:1px;height:234px;background:#b8b8b8"></div>
<div style="left:896px;top:259px;width:11px;height:1px;background:#b8b8b8"></div>
<div class="tr" style="left:907px;top:260px;width:1011px;height:47px;background:#d9f1ff"></div>
<div style="left:896px;top:306px;width:11px;height:1px;background:#c4c4c4"></div>
<div class="td" style="left:909px;top:260px"><span style="letter-spacing:-0.162px">1. Chovala chabuluu, 10004, mayunitsi</span></div>
<div class="td r" style="left:1368px;width:138px;top:260px"><span style="letter-spacing:-0.262px">0.00</span></div>
<div class="td r" style="left:1508px;width:135px;top:260px"><span style="letter-spacing:-0.141px">20.00</span></div>
<div class="td r" style="left:1645px;width:97px;top:260px"><span style="letter-spacing:-0.201px">1.000</span></div>
<div class="td r" style="left:1744px;width:172px;top:260px"><span style="letter-spacing:-0.141px">20.00</span></div>
<div class="tr" style="left:907px;top:307px;width:1011px;height:47px;background:#defbe2"></div>
<div style="left:896px;top:353px;width:11px;height:1px;background:#c4c4c4"></div>
<div class="td" style="left:909px;top:307px"><span style="letter-spacing:-0.163px">2. Suti ya amuna akuda, 10001, mayunitsi</span></div>
<div class="td r" style="left:1368px;width:138px;top:307px"><span style="letter-spacing:-0.262px">0.00</span></div>
<div class="td r" style="left:1508px;width:135px;top:307px"><span style="letter-spacing:-0.141px">15.00</span></div>
<div class="td r" style="left:1645px;width:97px;top:307px"><span style="letter-spacing:-0.201px">1.000</span></div>
<div class="td r" style="left:1744px;width:172px;top:307px"><span style="letter-spacing:-0.141px">15.00</span></div>
<div class="tr" style="left:907px;top:354px;width:1011px;height:47px;background:#d9f1ff"></div>
<div style="left:896px;top:400px;width:11px;height:1px;background:#c4c4c4"></div>
<div class="td" style="left:909px;top:354px"><span style="letter-spacing:-0.164px">3. Zovala zazimuna zobiriwira, 10003, mayunitsi</span></div>
<div class="td r" style="left:1368px;width:138px;top:354px"><span style="letter-spacing:-0.262px">0.00</span></div>
<div class="td r" style="left:1508px;width:135px;top:354px"><span style="letter-spacing:-0.141px">15.00</span></div>
<div class="td r" style="left:1645px;width:97px;top:354px"><span style="letter-spacing:-0.201px">1.000</span></div>
<div class="td r" style="left:1744px;width:172px;top:354px"><span style="letter-spacing:-0.141px">15.00</span></div>
<div class="tr" style="left:907px;top:401px;width:1011px;height:47px;background:#defbe2"></div>
<div style="left:896px;top:447px;width:11px;height:1px;background:#c4c4c4"></div>
<div class="td" style="left:909px;top:401px"><span style="letter-spacing:-0.211px">4. Chovala chachikasu, 10005, mayunitsi</span></div>
<div class="td r" style="left:1368px;width:138px;top:401px"><span style="letter-spacing:-0.262px">0.00</span></div>
<div class="td r" style="left:1508px;width:135px;top:401px"><span style="letter-spacing:-0.262px">9.50</span></div>
<div class="td r" style="left:1645px;width:97px;top:401px"><span style="letter-spacing:-0.201px">1.000</span></div>
<div class="td r" style="left:1744px;width:172px;top:401px"><span style="letter-spacing:-0.262px">9.50</span></div>
<div style="left:899px;top:420px;width:0;height:0;border-top:4px solid transparent;border-bottom:4px solid transparent;border-left:4px solid #555"></div>
</div>
<div style="left:895px;top:892px;width:1023px;height:43px;background:#f5f5f5;border-top:1px solid #c4c4c4"></div>
<div class="inp tah" style="left:909px;top:895px;width:457px;height:37px;font-size:20.500px;line-height:38px;padding-left:5px;border-color:#c8c8c8">59.50</div>
<div class="inp tah" style="left:1370px;top:895px;width:136px;height:37px;font-size:20.500px;line-height:38px;padding-right:5px;text-align:right;border-color:#c8c8c8">0</div>
<div class="inp tah" style="left:1647px;top:895px;width:95px;height:37px;font-size:20.500px;line-height:38px;padding-right:5px;text-align:right;border-color:#c8c8c8">4</div>
<div class="bar tah" style="left:895px;top:935px;height:26px;line-height:28px"><span style="letter-spacing:-0.579px">Malipiro</span></div>
<div class="lbl tah" style="left:896px;top:966px"><span style="letter-spacing:-0.298px">Sakani kusindikiza (F11)</span></div>
<div class="lbl tah" style="left:1152px;top:966px"><span style="letter-spacing:-0.276px">Mtundu wa malipiro (F12)</span></div>
<div class="lbl tah" style="left:1408px;top:966px"><span style="letter-spacing:-0.217px">Chiwerengero cha kasitomala (F9)</span></div>
<div class="lbl tah" style="left:1664px;top:966px"><span style="letter-spacing:-0.340px">Ndalama zosamvetseka</span></div>
<div class="inp tah" style="left:896px;top:980px;width:248px;height:29px;font-size:13px;line-height:27px;padding-left:2px"><span style="letter-spacing:-0.282px">Palibe cheke (F11)</span></div>
<div class="arr" style="left:1127px;top:993px"></div>
<div class="inp tah" style="left:1152px;top:980px;width:248px;height:29px;font-size:13px;line-height:27px;padding-left:2px"><span style="letter-spacing:-0.647px">Ndalama</span></div>
<div class="arr" style="left:1383px;top:993px"></div>
<div class="inp tah" style="left:1408px;top:980px;width:248px;height:29px;font-size:18.800px;line-height:28px;padding-left:2px;background:#3caf3c;border-color:#3a3a3a;color:#404040">0.00</div>
<div class="arr" style="left:1639px;top:986px;transform:rotate(180deg);border-left-width:3px;border-right-width:3px;border-top-width:3px;border-top-color:#4a8a4a"></div>
<div class="arr" style="left:1639px;top:999px;border-left-width:3px;border-right-width:3px;border-top-width:3px;border-top-color:#4a8a4a"></div>
<div class="tah" style="left:1665px;top:982px;font-size:19px;line-height:24px;font-weight:bold;color:#333;white-space:nowrap">-59.50</div>
<div class="bbtn tah" style="left:895px;top:1012px;background:#a5ec96"><span style="letter-spacing:-0.800px">Gulitsa</span></div>
<div class="bbtn tah" style="left:1151px;top:1012px;background:#ffffa4"><span style="letter-spacing:-0.855px">Chedwetsani</span></div>
<div class="bbtn tah" style="left:1407px;top:1012px;background:#ffdca0"><span style="letter-spacing:-0.777px">Palibe malipiro</span></div>
<div class="bbtn tah" style="left:1663px;top:1012px;background:#ffa0a0"><span style="letter-spacing:-0.944px">Kuletsa</span></div>
</div>
</body></html>
